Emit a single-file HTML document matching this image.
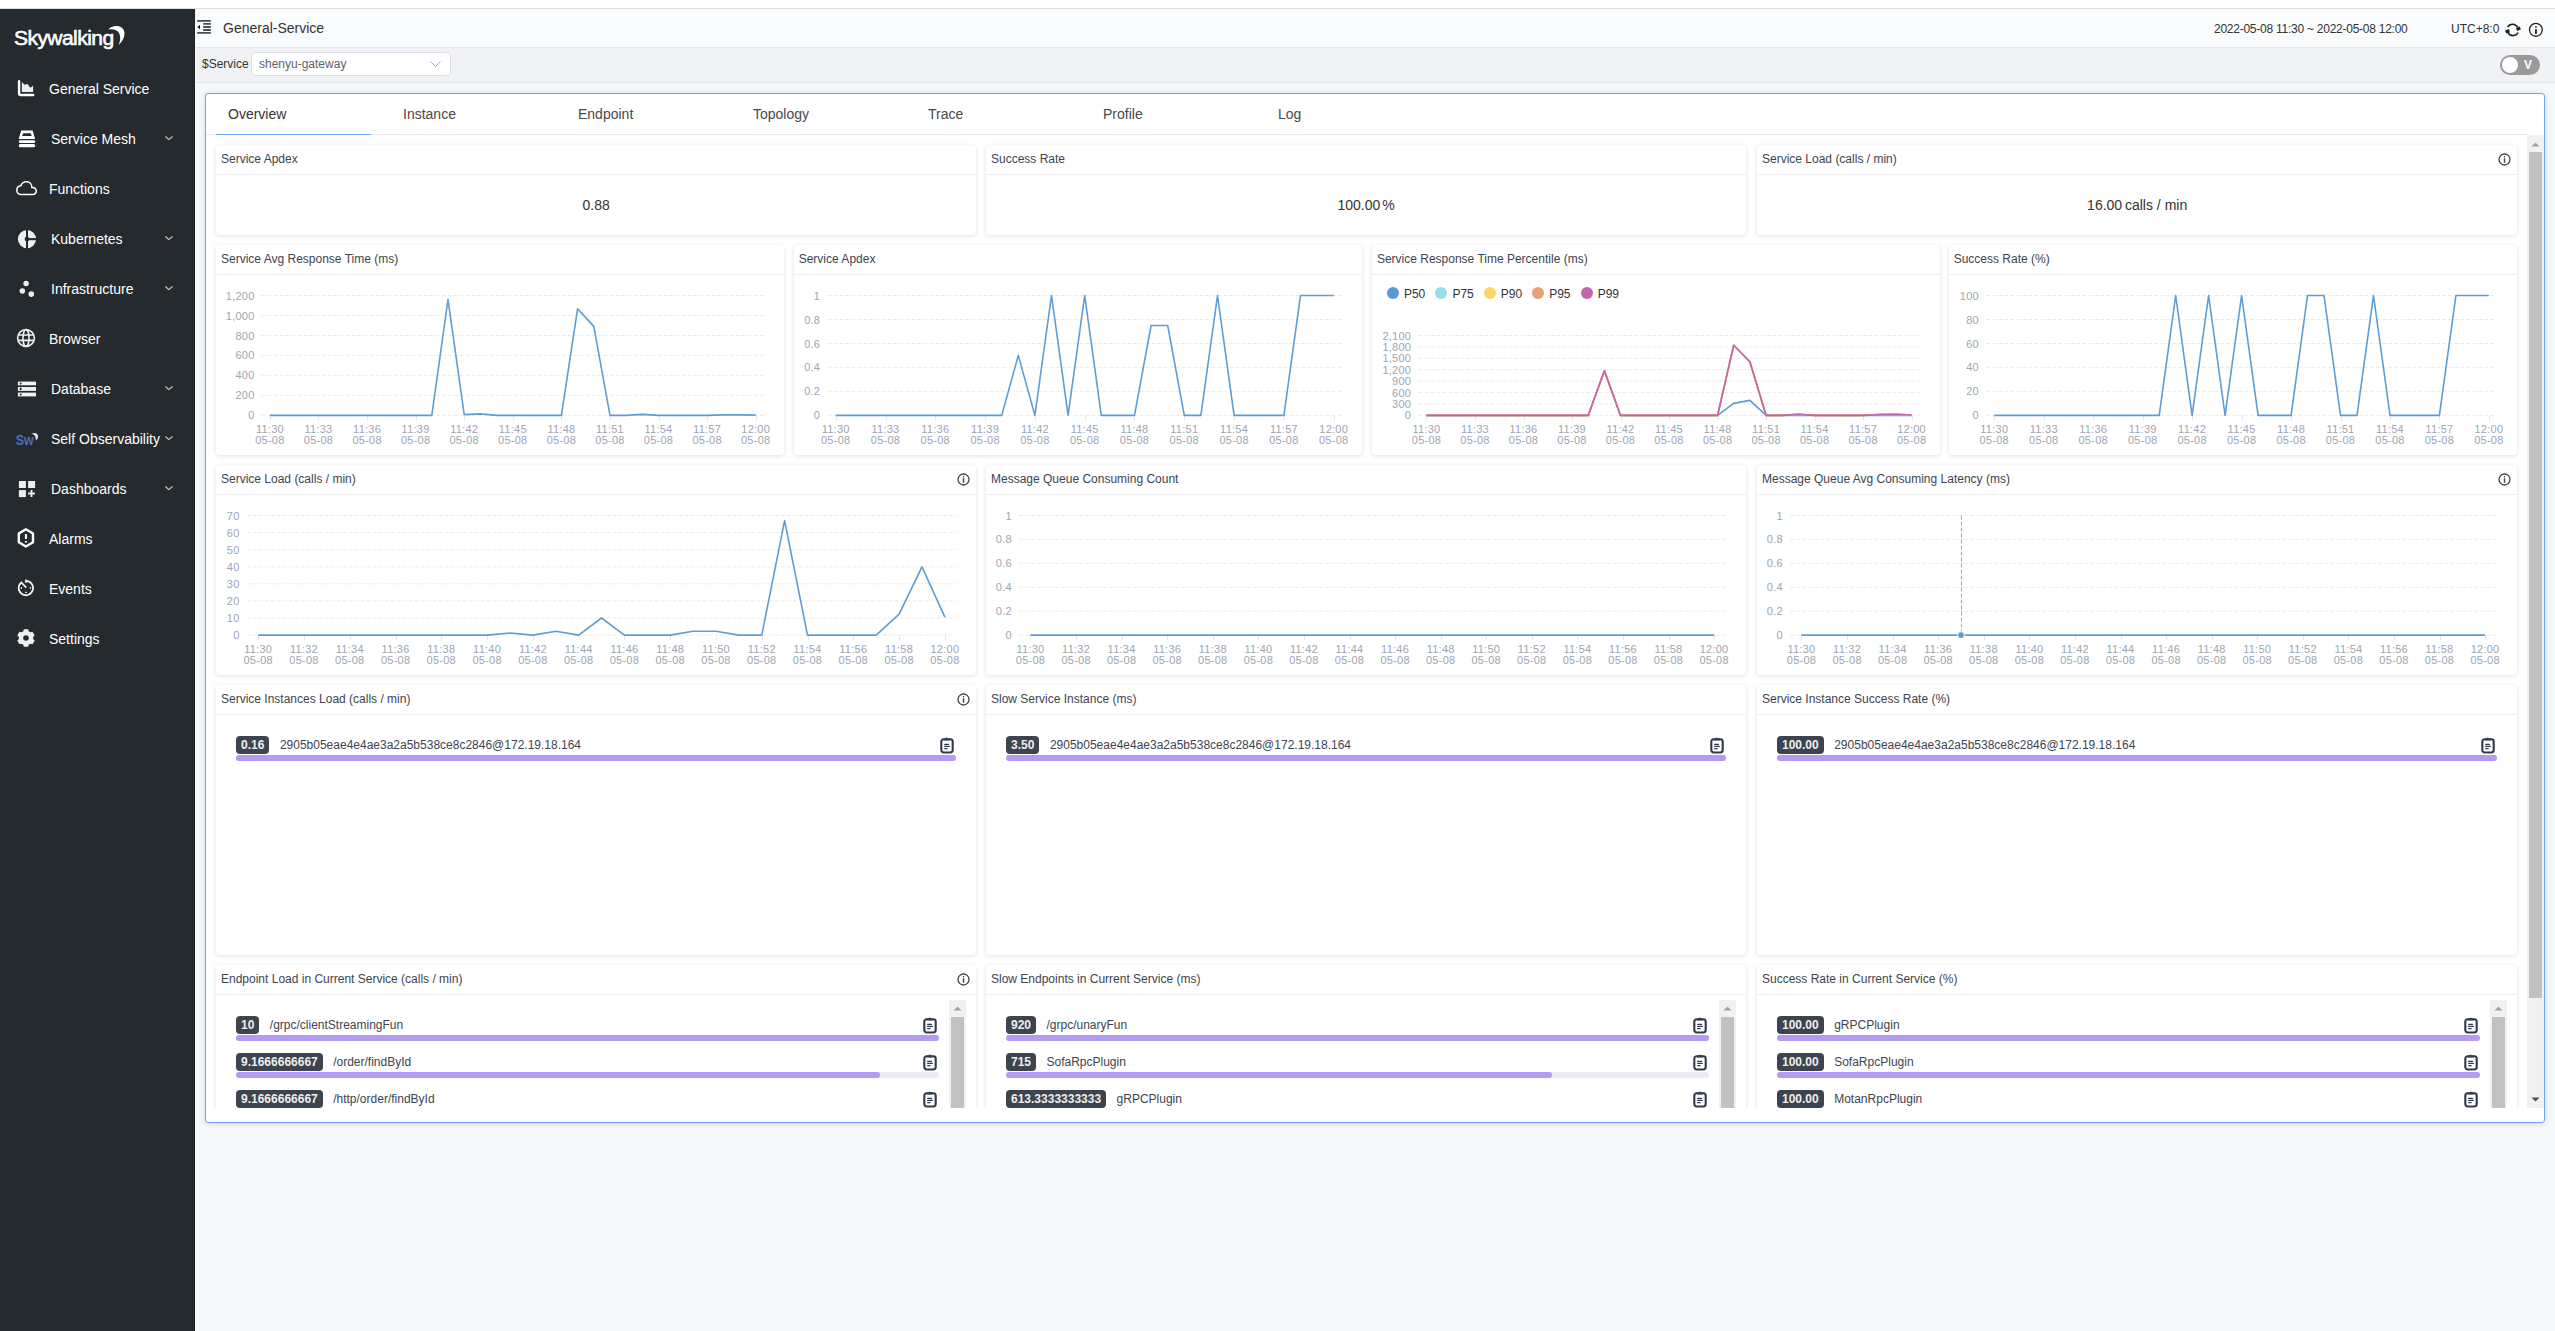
<!DOCTYPE html><html><head><meta charset="utf-8"><style>
*{box-sizing:border-box;margin:0;padding:0}
html,body{width:2555px;height:1331px;overflow:hidden;background:#f7f8fa;font-family:"Liberation Sans",sans-serif}
body{position:relative}
.a{position:absolute}
.mi{position:absolute;left:0;width:194px;height:24px;color:#fff;font-size:14px;line-height:24px;white-space:nowrap}
.mi .t{position:absolute;top:0}
.mi svg{position:absolute}
.panel{position:absolute;background:#fff;border-radius:4px;box-shadow:0 1px 4px rgba(0,0,0,.13)}
.ph{position:absolute;left:0;top:0;right:0;height:30px;border-bottom:1px solid #eee;font-size:12px;color:#3d444f;line-height:28px;padding-left:5px;white-space:nowrap}
.tab{position:absolute;top:106px;font-size:14px;color:#484848;line-height:16px;white-space:nowrap}
.badge{position:absolute;height:18px;line-height:18px;background:#3d444f;color:#eee;font-size:12px;font-weight:bold;border-radius:4px;padding:0 5px;white-space:nowrap}
.itxt{position:absolute;font-size:12px;color:#3d444f;line-height:18px;white-space:nowrap}
.bar{position:absolute;height:6px;border-radius:3px;background:#b49af2}
.track{position:absolute;height:6px;border-radius:3px;background:#e9ecf5}
svg text{font-family:"Liberation Sans",sans-serif}
</style></head><body>
<div class="a" style="left:0;top:0;width:2555px;height:9px;background:#fff;border-bottom:1px solid #dcdfe3"></div>
<div class="a" style="left:0;top:9px;width:195px;height:1322px;background:#252a2f;border-right:1px solid #1d2125"></div>
<div class="a" style="left:14px;top:26px;font-size:21px;color:#fff;letter-spacing:-.55px;line-height:24px;-webkit-text-stroke:.6px #fff;white-space:nowrap">Skywalking</div>
<svg class="a" style="left:106px;top:24px" width="22" height="24" viewBox="0 0 22 24"><path d="M2.3 5.6C5 2 11 .7 15.5 3.5C19.8 6.5 20.2 14.2 12.5 21C15.2 15.5 14.6 10.2 11.6 7.3C9.2 5.1 5.6 4.7 2.3 5.6Z" fill="#fff"/></svg>
<svg class="a" style="left:14px;top:77px" width="30" height="24" viewBox="0 0 30 24"><path d="M5.05 4.1V16.7Q5.05 17.95 6.3 17.95H19.2" stroke="#fff" stroke-width="2.4" fill="none" stroke-linecap="round"/><path d="M7.8 15V4.9l2.8 2.9 2.9-.8 2.9 3.8 2.7-2V15z" fill="#eee"/></svg>
<div class="a" style="left:49px;top:81px;color:#fff;font-size:14px;line-height:16px;white-space:nowrap">General Service</div>
<svg class="a" style="left:14px;top:127px" width="30" height="24" viewBox="0 0 30 24"><path fill-rule="evenodd" fill="#fff" d="M7.2 3.6h11.4l2.5 8.3H4.7zM9.2 6.2l-1.1 2.8h9.8l-1.3-2.8z"/><rect x="4.8" y="13.2" width="16.4" height="2.8" rx="1.4" fill="#fff"/><rect x="4.8" y="17.1" width="16.4" height="3.1" rx="1.5" fill="#fff"/></svg>
<div class="a" style="left:51px;top:131px;color:#fff;font-size:14px;line-height:16px;white-space:nowrap">Service Mesh</div>
<svg class="a" style="left:164px;top:136px" width="10" height="6" viewBox="0 0 10 6"><path d="M1.45 .5L4.8 3.6L8.5 .5" stroke="#d0d0d0" stroke-width="1.1" fill="none"/></svg>
<svg class="a" style="left:12px;top:176px" width="30" height="24" viewBox="0 0 30 24"><path d="M8.3 18.4H20.2A3.5 3.5 0 1 0 19.8 11.6A5.55 5.55 0 0 0 8.9 9.8A4.35 4.35 0 0 0 8.3 18.4Z" fill="none" stroke="#fff" stroke-width="1.5" stroke-linejoin="round"/></svg>
<div class="a" style="left:49px;top:181px;color:#fff;font-size:14px;line-height:16px;white-space:nowrap">Functions</div>
<svg class="a" style="left:14px;top:227px" width="30" height="24" viewBox="0 0 30 24"><defs><mask id="km"><rect width="24" height="24" fill="#fff"/><rect x="12" y="0" width="2" height="24" fill="#000"/><rect x="13" y="11.1" width="12" height="2.1" fill="#000"/><circle cx="13" cy="12.1" r="2.4" fill="#000"/></mask></defs><circle cx="13" cy="12.1" r="9.1" fill="#eee" mask="url(#km)"/></svg>
<div class="a" style="left:51px;top:231px;color:#fff;font-size:14px;line-height:16px;white-space:nowrap">Kubernetes</div>
<svg class="a" style="left:164px;top:236px" width="10" height="6" viewBox="0 0 10 6"><path d="M1.45 .5L4.8 3.6L8.5 .5" stroke="#d0d0d0" stroke-width="1.1" fill="none"/></svg>
<svg class="a" style="left:14px;top:277px" width="30" height="24" viewBox="0 0 30 24"><circle cx="12.1" cy="6.5" r="2.75" fill="#eee"/><circle cx="8.3" cy="13.9" r="2.75" fill="#eee"/><circle cx="17.3" cy="17.1" r="2.8" fill="#eee"/></svg>
<div class="a" style="left:51px;top:281px;color:#fff;font-size:14px;line-height:16px;white-space:nowrap">Infrastructure</div>
<svg class="a" style="left:164px;top:286px" width="10" height="6" viewBox="0 0 10 6"><path d="M1.45 .5L4.8 3.6L8.5 .5" stroke="#d0d0d0" stroke-width="1.1" fill="none"/></svg>
<svg class="a" style="left:12px;top:326px" width="30" height="24" viewBox="0 0 30 24"><g fill="none" stroke="#eee" stroke-width="1.6"><circle cx="14" cy="12" r="8.4"/><ellipse cx="14" cy="12" rx="3" ry="8.4"/><path d="M6.2 9H21.8M6.2 14.4H21.8"/></g></svg>
<div class="a" style="left:49px;top:331px;color:#fff;font-size:14px;line-height:16px;white-space:nowrap">Browser</div>
<svg class="a" style="left:14px;top:377px" width="30" height="24" viewBox="0 0 30 24"><rect x="3.9" y="4.6" width="18.1" height="3.7" fill="#f2f2f2"/><rect x="3.9" y="10" width="18.1" height="3.9" fill="#eee"/><rect x="3.9" y="15.6" width="18.1" height="3.8" fill="#f2f2f2"/><circle cx="6.6" cy="6.45" r="1" fill="#252a2f"/><ellipse cx="6.6" cy="11.95" rx="1" ry="1.4" fill="#252a2f"/><circle cx="6.6" cy="17.5" r="1" fill="#252a2f"/></svg>
<div class="a" style="left:51px;top:381px;color:#fff;font-size:14px;line-height:16px;white-space:nowrap">Database</div>
<svg class="a" style="left:164px;top:386px" width="10" height="6" viewBox="0 0 10 6"><path d="M1.45 .5L4.8 3.6L8.5 .5" stroke="#d0d0d0" stroke-width="1.1" fill="none"/></svg>
<svg class="a" style="left:12px;top:426px" width="30" height="24" viewBox="0 0 30 24"><text x="3.8" y="18.8" font-size="15" font-weight="bold" fill="#4670c0" textLength="18" lengthAdjust="spacingAndGlyphs">Sw</text><path d="M19.7 7.8C22 6.2 26.3 7 26.1 10.8C26 12.5 25 13.8 23.6 14.4C24.3 11.5 23.2 8.8 19.7 7.8Z" fill="#e6e6e6"/></svg>
<div class="a" style="left:51px;top:431px;color:#fff;font-size:14px;line-height:16px;white-space:nowrap">Self Observability</div>
<svg class="a" style="left:164px;top:436px" width="10" height="6" viewBox="0 0 10 6"><path d="M1.45 .5L4.8 3.6L8.5 .5" stroke="#d0d0d0" stroke-width="1.1" fill="none"/></svg>
<svg class="a" style="left:14px;top:476px" width="30" height="24" viewBox="0 0 30 24"><rect x="4.9" y="5" width="7" height="7" fill="#eee"/><rect x="14.1" y="5" width="7" height="7" fill="#eee"/><rect x="4.9" y="14.1" width="7" height="7" fill="#eee"/><path d="M17.5 14.1v6.8M14.1 17.5h6.8" stroke="#eee" stroke-width="1.9"/></svg>
<div class="a" style="left:51px;top:481px;color:#fff;font-size:14px;line-height:16px;white-space:nowrap">Dashboards</div>
<svg class="a" style="left:164px;top:486px" width="10" height="6" viewBox="0 0 10 6"><path d="M1.45 .5L4.8 3.6L8.5 .5" stroke="#d0d0d0" stroke-width="1.1" fill="none"/></svg>
<svg class="a" style="left:14px;top:526px" width="30" height="24" viewBox="0 0 30 24"><path d="M11.9 3.2L19 7.55V16.25L11.9 20.6L4.8 16.25V7.55Z" fill="none" stroke="#fff" stroke-width="2.4" stroke-linejoin="round"/><rect x="10.9" y="7.9" width="2.1" height="5.2" rx=".6" fill="#fff"/><rect x="10.8" y="15" width="2.3" height="1.6" rx=".6" fill="#fff"/></svg>
<div class="a" style="left:49px;top:531px;color:#fff;font-size:14px;line-height:16px;white-space:nowrap">Alarms</div>
<svg class="a" style="left:14px;top:576px" width="30" height="24" viewBox="0 0 30 24"><path d="M11.9 4.8A7.2 7.2 0 1 1 7.27 6.48L12.3 11.7" fill="none" stroke="#eee" stroke-width="1.8"/><rect x="11" y="3.6" width="2" height="3" fill="#eee"/><rect x="6.8" y="11" width="1.2" height="1.8" fill="#eee"/><rect x="15.8" y="11" width="1.2" height="1.8" fill="#eee"/><rect x="11" y="15.8" width="1.8" height="1.2" fill="#eee"/></svg>
<div class="a" style="left:49px;top:581px;color:#fff;font-size:14px;line-height:16px;white-space:nowrap">Events</div>
<svg class="a" style="left:14px;top:626px" width="30" height="24" viewBox="0 0 30 24"><path fill-rule="evenodd" fill="#eee" d="M14.62 5.18 L14.20 3.17 L9.80 3.17 L9.38 5.18 L7.41 6.33 L5.45 5.68 L3.25 9.49 L4.79 10.86 L4.79 13.14 L3.25 14.51 L5.45 18.32 L7.41 17.67 L9.38 18.82 L9.80 20.83 L14.20 20.83 L14.62 18.82 L16.59 17.67 L18.55 18.32 L20.75 14.51 L19.21 13.14 L19.21 10.86 L20.75 9.49 L18.55 5.68 L16.59 6.33Z M12 9.2A2.8 2.8 0 1 0 12 14.8A2.8 2.8 0 1 0 12 9.2Z"/></svg>
<div class="a" style="left:49px;top:631px;color:#fff;font-size:14px;line-height:16px;white-space:nowrap">Settings</div>
<div class="a" style="left:196px;top:9px;width:2359px;height:39px;background:#fafbfc;border-bottom:1px solid #dfe4e8"></div>
<svg class="a" style="left:196px;top:19px" width="16" height="16" viewBox="0 0 16 16"><g fill="#4a4d52"><rect x="1.1" y="1" width="13.8" height="1.8" rx=".6"/><rect x="7.1" y="4" width="7.8" height="1.8" rx=".6"/><rect x="7.1" y="7.1" width="7.8" height="1.8" rx=".6"/><rect x="7.1" y="10.1" width="7.8" height="1.8" rx=".6"/><rect x="1.1" y="13" width="13.8" height="1.8" rx=".6"/></g><path d="M1.3 7.9L4 5.9V10.2Z" fill="#111"/></svg>
<div class="a" style="left:223px;top:20px;font-size:14px;color:#333;line-height:16px">General-Service</div>
<div class="a" style="left:2214px;top:22px;font-size:12px;color:#333;line-height:14px;letter-spacing:-.25px;white-space:nowrap">2022-05-08 11:30 ~ 2022-05-08 12:00</div>
<div class="a" style="left:2451px;top:22px;font-size:12px;color:#333;line-height:14px;white-space:nowrap">UTC+8:0</div>
<svg class="a" style="left:2504px;top:21px" width="18" height="18" viewBox="0 0 18 18"><g fill="none" stroke="#222" stroke-width="1.6"><path d="M3.6 6.2A5.6 5.6 0 0 1 13.6 6.4"/><path d="M14.1 11.5A5.6 5.6 0 0 1 3.9 11.2"/></g><rect x="-2" y="-1.6" width="4" height="3.3" fill="#222" transform="translate(14.4 7.7) rotate(-20)"/><rect x="-2" y="-1.7" width="4" height="3.3" fill="#222" transform="translate(3.5 10.4) rotate(-20)"/></svg>
<svg class="a" style="left:2527px;top:21px" width="18" height="18" viewBox="0 0 18 18"><circle cx="8.9" cy="8.8" r="6.45" fill="none" stroke="#222" stroke-width="1.3"/><rect x="8.05" y="5.2" width="1.8" height="1.6" rx=".4" fill="#222"/><rect x="8.05" y="8.2" width="1.8" height="4.7" rx=".3" fill="#222"/></svg>
<div class="a" style="left:196px;top:48px;width:2359px;height:35px;background:#f0f2f5;border-bottom:1px solid #dfe4e8"></div>
<div class="a" style="left:202px;top:57px;font-size:12px;color:#333;line-height:14px">$Service</div>
<div class="a" style="left:251px;top:52px;width:200px;height:24px;background:#fff;border:1px solid #dcdfe6;border-radius:4px"></div>
<div class="a" style="left:259px;top:57px;font-size:12px;color:#606266;line-height:14px">shenyu-gateway</div>
<svg class="a" style="left:430px;top:61px" width="11" height="7" viewBox="0 0 11 7"><path d="M0.5 0.5l5 5 5-5" stroke="#a8abb2" stroke-width="1" fill="none"/></svg>
<div class="a" style="left:2500px;top:55px;width:40px;height:20px;border-radius:10px;background:#9a9a9a"></div>
<div class="a" style="left:2502px;top:57px;width:16px;height:16px;border-radius:50%;background:#fff"></div>
<div class="a" style="left:2524px;top:58px;font-size:12px;font-weight:bold;color:#fff;line-height:14px">V</div>
<div class="a" style="left:205px;top:93px;width:2340px;height:1030px;background:#fff;border:1px solid #6ea0ff;border-radius:3px;box-shadow:0 1px 6px rgba(0,0,0,.12)"></div>
<div class="a" style="left:206px;top:134px;width:2321px;height:1px;background:#e8e8e8"></div>
<div class="a" style="left:216px;top:134px;width:155px;height:1px;background:#6ea2ff"></div>
<div class="tab" style="left:228px;color:#333">Overview</div>
<div class="tab" style="left:403px;">Instance</div>
<div class="tab" style="left:578px;">Endpoint</div>
<div class="tab" style="left:753px;">Topology</div>
<div class="tab" style="left:928px;">Trace</div>
<div class="tab" style="left:1103px;">Profile</div>
<div class="tab" style="left:1278px;">Log</div>
<div class="a" style="left:206px;top:135px;width:2321px;height:973px;overflow:hidden">
<div class="panel" style="left:10.0px;top:10.0px;width:760.3px;height:90px"><div class="ph">Service Apdex</div><div class="a" style="left:0;right:0;top:51px;text-align:center;font-size:14px;color:#333;line-height:18px">0.88</div></div>
<div class="panel" style="left:780.0px;top:10.0px;width:760.3px;height:90px"><div class="ph">Success Rate</div><div class="a" style="left:0;right:0;top:51px;text-align:center;font-size:14px;color:#333;line-height:18px">100.00<span style="margin-left:2px">%</span></div></div>
<div class="panel" style="left:1551.0px;top:10.0px;width:760.3px;height:90px"><div class="ph">Service Load (calls / min)</div><svg class="a" style="right:6px;top:8px" width="13" height="13" viewBox="0 0 13 13"><circle cx="6.5" cy="6.5" r="5.5" fill="none" stroke="#3d444f" stroke-width="1.3"/><rect x="5.8" y="3.1" width="1.4" height="1.3" rx=".3" fill="#3d444f"/><rect x="5.8" y="5.2" width="1.4" height="4.6" rx=".3" fill="#3d444f"/></svg><div class="a" style="left:0;right:0;top:51px;text-align:center;font-size:14px;color:#333;line-height:18px">16.00<span style="margin-left:2.8px">calls / min</span></div></div>
<div class="panel" style="left:10.0px;top:110.0px;width:568.2px;height:210px"><div class="ph">Service Avg Response Time (ms)</div><svg class="a" style="left:0;top:0" width="568.2" height="210"><line x1="45.8" y1="50.5" x2="547.8" y2="50.5" stroke="#ebebeb" stroke-width="1" stroke-dasharray="4 2"/><text x="38.6" y="54.5" font-size="11" letter-spacing=".25" fill="#9da5b2" text-anchor="end">1,200</text><line x1="45.8" y1="70.5" x2="547.8" y2="70.5" stroke="#ebebeb" stroke-width="1" stroke-dasharray="4 2"/><text x="38.6" y="74.5" font-size="11" letter-spacing=".25" fill="#9da5b2" text-anchor="end">1,000</text><line x1="45.8" y1="90.5" x2="547.8" y2="90.5" stroke="#ebebeb" stroke-width="1" stroke-dasharray="4 2"/><text x="38.6" y="94.5" font-size="11" letter-spacing=".25" fill="#9da5b2" text-anchor="end">800</text><line x1="45.8" y1="110.4" x2="547.8" y2="110.4" stroke="#ebebeb" stroke-width="1" stroke-dasharray="4 2"/><text x="38.6" y="114.4" font-size="11" letter-spacing=".25" fill="#9da5b2" text-anchor="end">600</text><line x1="45.8" y1="130.4" x2="547.8" y2="130.4" stroke="#ebebeb" stroke-width="1" stroke-dasharray="4 2"/><text x="38.6" y="134.4" font-size="11" letter-spacing=".25" fill="#9da5b2" text-anchor="end">400</text><line x1="45.8" y1="150.4" x2="547.8" y2="150.4" stroke="#ebebeb" stroke-width="1" stroke-dasharray="4 2"/><text x="38.6" y="154.4" font-size="11" letter-spacing=".25" fill="#9da5b2" text-anchor="end">200</text><line x1="45.8" y1="170.4" x2="547.8" y2="170.4" stroke="#ebebeb" stroke-width="1" stroke-dasharray="4 2"/><text x="38.6" y="174.4" font-size="11" letter-spacing=".25" fill="#9da5b2" text-anchor="end">0</text><line x1="54.5" y1="170.4" x2="54.5" y2="175.4" stroke="#e3e5ea" stroke-width="1"/><text x="53.9" y="188.4" font-size="11" letter-spacing=".25" fill="#9da5b2" text-anchor="middle">11:30</text><text x="53.9" y="199.4" font-size="11" letter-spacing=".25" fill="#9da5b2" text-anchor="middle">05-08</text><line x1="102.5" y1="170.4" x2="102.5" y2="175.4" stroke="#e3e5ea" stroke-width="1"/><text x="102.5" y="188.4" font-size="11" letter-spacing=".25" fill="#9da5b2" text-anchor="middle">11:33</text><text x="102.5" y="199.4" font-size="11" letter-spacing=".25" fill="#9da5b2" text-anchor="middle">05-08</text><line x1="151.5" y1="170.4" x2="151.5" y2="175.4" stroke="#e3e5ea" stroke-width="1"/><text x="151.1" y="188.4" font-size="11" letter-spacing=".25" fill="#9da5b2" text-anchor="middle">11:36</text><text x="151.1" y="199.4" font-size="11" letter-spacing=".25" fill="#9da5b2" text-anchor="middle">05-08</text><line x1="200.5" y1="170.4" x2="200.5" y2="175.4" stroke="#e3e5ea" stroke-width="1"/><text x="199.6" y="188.4" font-size="11" letter-spacing=".25" fill="#9da5b2" text-anchor="middle">11:39</text><text x="199.6" y="199.4" font-size="11" letter-spacing=".25" fill="#9da5b2" text-anchor="middle">05-08</text><line x1="248.5" y1="170.4" x2="248.5" y2="175.4" stroke="#e3e5ea" stroke-width="1"/><text x="248.2" y="188.4" font-size="11" letter-spacing=".25" fill="#9da5b2" text-anchor="middle">11:42</text><text x="248.2" y="199.4" font-size="11" letter-spacing=".25" fill="#9da5b2" text-anchor="middle">05-08</text><line x1="297.5" y1="170.4" x2="297.5" y2="175.4" stroke="#e3e5ea" stroke-width="1"/><text x="296.8" y="188.4" font-size="11" letter-spacing=".25" fill="#9da5b2" text-anchor="middle">11:45</text><text x="296.8" y="199.4" font-size="11" letter-spacing=".25" fill="#9da5b2" text-anchor="middle">05-08</text><line x1="345.5" y1="170.4" x2="345.5" y2="175.4" stroke="#e3e5ea" stroke-width="1"/><text x="345.4" y="188.4" font-size="11" letter-spacing=".25" fill="#9da5b2" text-anchor="middle">11:48</text><text x="345.4" y="199.4" font-size="11" letter-spacing=".25" fill="#9da5b2" text-anchor="middle">05-08</text><line x1="394.5" y1="170.4" x2="394.5" y2="175.4" stroke="#e3e5ea" stroke-width="1"/><text x="394.0" y="188.4" font-size="11" letter-spacing=".25" fill="#9da5b2" text-anchor="middle">11:51</text><text x="394.0" y="199.4" font-size="11" letter-spacing=".25" fill="#9da5b2" text-anchor="middle">05-08</text><line x1="443.5" y1="170.4" x2="443.5" y2="175.4" stroke="#e3e5ea" stroke-width="1"/><text x="442.5" y="188.4" font-size="11" letter-spacing=".25" fill="#9da5b2" text-anchor="middle">11:54</text><text x="442.5" y="199.4" font-size="11" letter-spacing=".25" fill="#9da5b2" text-anchor="middle">05-08</text><line x1="491.5" y1="170.4" x2="491.5" y2="175.4" stroke="#e3e5ea" stroke-width="1"/><text x="491.1" y="188.4" font-size="11" letter-spacing=".25" fill="#9da5b2" text-anchor="middle">11:57</text><text x="491.1" y="199.4" font-size="11" letter-spacing=".25" fill="#9da5b2" text-anchor="middle">05-08</text><line x1="540.5" y1="170.4" x2="540.5" y2="175.4" stroke="#e3e5ea" stroke-width="1"/><text x="539.7" y="188.4" font-size="11" letter-spacing=".25" fill="#9da5b2" text-anchor="middle">12:00</text><text x="539.7" y="199.4" font-size="11" letter-spacing=".25" fill="#9da5b2" text-anchor="middle">05-08</text><polyline points="53.9,170.4 70.1,170.4 86.3,170.4 102.5,170.4 118.7,170.4 134.9,170.4 151.1,170.4 167.3,170.4 183.4,170.4 199.6,170.4 215.8,170.4 232.0,54.5 248.2,169.6 264.4,168.9 280.6,170.4 296.8,170.4 313.0,170.4 329.2,170.4 345.4,170.4 361.6,63.7 377.8,81.4 394.0,170.4 410.2,170.4 426.3,169.4 442.5,170.4 458.7,170.4 474.9,170.4 491.1,170.4 507.3,169.9 523.5,169.9 539.7,170.1" fill="none" stroke="#5d9dd6" stroke-width="1.6" stroke-linejoin="round"/></svg></div>
<div class="panel" style="left:587.7px;top:110.0px;width:568.4px;height:210px"><div class="ph">Service Apdex</div><svg class="a" style="left:0;top:0" width="568.4" height="210"><line x1="33.4" y1="50.5" x2="548.0" y2="50.5" stroke="#ebebeb" stroke-width="1" stroke-dasharray="4 2"/><text x="26.2" y="54.5" font-size="11" letter-spacing=".25" fill="#9da5b2" text-anchor="end">1</text><line x1="33.4" y1="74.5" x2="548.0" y2="74.5" stroke="#ebebeb" stroke-width="1" stroke-dasharray="4 2"/><text x="26.2" y="78.5" font-size="11" letter-spacing=".25" fill="#9da5b2" text-anchor="end">0.8</text><line x1="33.4" y1="98.5" x2="548.0" y2="98.5" stroke="#ebebeb" stroke-width="1" stroke-dasharray="4 2"/><text x="26.2" y="102.5" font-size="11" letter-spacing=".25" fill="#9da5b2" text-anchor="end">0.6</text><line x1="33.4" y1="122.4" x2="548.0" y2="122.4" stroke="#ebebeb" stroke-width="1" stroke-dasharray="4 2"/><text x="26.2" y="126.4" font-size="11" letter-spacing=".25" fill="#9da5b2" text-anchor="end">0.4</text><line x1="33.4" y1="146.4" x2="548.0" y2="146.4" stroke="#ebebeb" stroke-width="1" stroke-dasharray="4 2"/><text x="26.2" y="150.4" font-size="11" letter-spacing=".25" fill="#9da5b2" text-anchor="end">0.2</text><line x1="33.4" y1="170.4" x2="548.0" y2="170.4" stroke="#ebebeb" stroke-width="1" stroke-dasharray="4 2"/><text x="26.2" y="174.4" font-size="11" letter-spacing=".25" fill="#9da5b2" text-anchor="end">0</text><line x1="42.5" y1="170.4" x2="42.5" y2="175.4" stroke="#e3e5ea" stroke-width="1"/><text x="41.7" y="188.4" font-size="11" letter-spacing=".25" fill="#9da5b2" text-anchor="middle">11:30</text><text x="41.7" y="199.4" font-size="11" letter-spacing=".25" fill="#9da5b2" text-anchor="middle">05-08</text><line x1="92.5" y1="170.4" x2="92.5" y2="175.4" stroke="#e3e5ea" stroke-width="1"/><text x="91.5" y="188.4" font-size="11" letter-spacing=".25" fill="#9da5b2" text-anchor="middle">11:33</text><text x="91.5" y="199.4" font-size="11" letter-spacing=".25" fill="#9da5b2" text-anchor="middle">05-08</text><line x1="141.5" y1="170.4" x2="141.5" y2="175.4" stroke="#e3e5ea" stroke-width="1"/><text x="141.3" y="188.4" font-size="11" letter-spacing=".25" fill="#9da5b2" text-anchor="middle">11:36</text><text x="141.3" y="199.4" font-size="11" letter-spacing=".25" fill="#9da5b2" text-anchor="middle">05-08</text><line x1="191.5" y1="170.4" x2="191.5" y2="175.4" stroke="#e3e5ea" stroke-width="1"/><text x="191.1" y="188.4" font-size="11" letter-spacing=".25" fill="#9da5b2" text-anchor="middle">11:39</text><text x="191.1" y="199.4" font-size="11" letter-spacing=".25" fill="#9da5b2" text-anchor="middle">05-08</text><line x1="241.5" y1="170.4" x2="241.5" y2="175.4" stroke="#e3e5ea" stroke-width="1"/><text x="240.9" y="188.4" font-size="11" letter-spacing=".25" fill="#9da5b2" text-anchor="middle">11:42</text><text x="240.9" y="199.4" font-size="11" letter-spacing=".25" fill="#9da5b2" text-anchor="middle">05-08</text><line x1="291.5" y1="170.4" x2="291.5" y2="175.4" stroke="#e3e5ea" stroke-width="1"/><text x="290.7" y="188.4" font-size="11" letter-spacing=".25" fill="#9da5b2" text-anchor="middle">11:45</text><text x="290.7" y="199.4" font-size="11" letter-spacing=".25" fill="#9da5b2" text-anchor="middle">05-08</text><line x1="340.5" y1="170.4" x2="340.5" y2="175.4" stroke="#e3e5ea" stroke-width="1"/><text x="340.5" y="188.4" font-size="11" letter-spacing=".25" fill="#9da5b2" text-anchor="middle">11:48</text><text x="340.5" y="199.4" font-size="11" letter-spacing=".25" fill="#9da5b2" text-anchor="middle">05-08</text><line x1="390.5" y1="170.4" x2="390.5" y2="175.4" stroke="#e3e5ea" stroke-width="1"/><text x="390.3" y="188.4" font-size="11" letter-spacing=".25" fill="#9da5b2" text-anchor="middle">11:51</text><text x="390.3" y="199.4" font-size="11" letter-spacing=".25" fill="#9da5b2" text-anchor="middle">05-08</text><line x1="440.5" y1="170.4" x2="440.5" y2="175.4" stroke="#e3e5ea" stroke-width="1"/><text x="440.1" y="188.4" font-size="11" letter-spacing=".25" fill="#9da5b2" text-anchor="middle">11:54</text><text x="440.1" y="199.4" font-size="11" letter-spacing=".25" fill="#9da5b2" text-anchor="middle">05-08</text><line x1="490.5" y1="170.4" x2="490.5" y2="175.4" stroke="#e3e5ea" stroke-width="1"/><text x="489.9" y="188.4" font-size="11" letter-spacing=".25" fill="#9da5b2" text-anchor="middle">11:57</text><text x="489.9" y="199.4" font-size="11" letter-spacing=".25" fill="#9da5b2" text-anchor="middle">05-08</text><line x1="540.5" y1="170.4" x2="540.5" y2="175.4" stroke="#e3e5ea" stroke-width="1"/><text x="539.7" y="188.4" font-size="11" letter-spacing=".25" fill="#9da5b2" text-anchor="middle">12:00</text><text x="539.7" y="199.4" font-size="11" letter-spacing=".25" fill="#9da5b2" text-anchor="middle">05-08</text><polyline points="41.7,170.4 58.3,170.4 74.9,170.4 91.5,170.4 108.1,170.4 124.7,170.4 141.3,170.4 157.9,170.4 174.5,170.4 191.1,170.4 207.7,170.4 224.3,110.4 240.9,170.4 257.5,50.5 274.1,170.4 290.7,50.5 307.3,170.4 323.9,170.4 340.5,170.4 357.1,80.5 373.7,80.5 390.3,170.4 406.9,170.4 423.5,50.5 440.1,170.4 456.7,170.4 473.3,170.4 489.9,170.4 506.5,50.5 523.1,50.5 539.7,50.5" fill="none" stroke="#5d9dd6" stroke-width="1.6" stroke-linejoin="round"/></svg></div>
<div class="panel" style="left:1165.9px;top:110.0px;width:568.2px;height:210px"><div class="ph">Service Response Time Percentile (ms)</div><div class="a" style="left:15.0px;top:41.6px;width:12px;height:12px;border-radius:50%;background:#5b9bd5"></div><div class="a" style="left:32.0px;top:42px;font-size:12px;color:#333;line-height:15px">P50</div><div class="a" style="left:63.5px;top:41.6px;width:12px;height:12px;border-radius:50%;background:#96dee8"></div><div class="a" style="left:80.5px;top:42px;font-size:12px;color:#333;line-height:15px">P75</div><div class="a" style="left:111.9px;top:41.6px;width:12px;height:12px;border-radius:50%;background:#f6d864"></div><div class="a" style="left:128.9px;top:42px;font-size:12px;color:#333;line-height:15px">P90</div><div class="a" style="left:160.3px;top:41.6px;width:12px;height:12px;border-radius:50%;background:#ea9f7b"></div><div class="a" style="left:177.3px;top:42px;font-size:12px;color:#333;line-height:15px">P95</div><div class="a" style="left:208.8px;top:41.6px;width:12px;height:12px;border-radius:50%;background:#c464ad"></div><div class="a" style="left:225.8px;top:42px;font-size:12px;color:#333;line-height:15px">P99</div><svg class="a" style="left:0;top:0" width="568.2" height="210"><line x1="46.4" y1="90.5" x2="547.7" y2="90.5" stroke="#ebebeb" stroke-width="1" stroke-dasharray="4 2"/><text x="39.2" y="94.5" font-size="11" letter-spacing=".25" fill="#9da5b2" text-anchor="end">2,100</text><line x1="46.4" y1="101.9" x2="547.7" y2="101.9" stroke="#ebebeb" stroke-width="1" stroke-dasharray="4 2"/><text x="39.2" y="105.9" font-size="11" letter-spacing=".25" fill="#9da5b2" text-anchor="end">1,800</text><line x1="46.4" y1="113.3" x2="547.7" y2="113.3" stroke="#ebebeb" stroke-width="1" stroke-dasharray="4 2"/><text x="39.2" y="117.3" font-size="11" letter-spacing=".25" fill="#9da5b2" text-anchor="end">1,500</text><line x1="46.4" y1="124.7" x2="547.7" y2="124.7" stroke="#ebebeb" stroke-width="1" stroke-dasharray="4 2"/><text x="39.2" y="128.7" font-size="11" letter-spacing=".25" fill="#9da5b2" text-anchor="end">1,200</text><line x1="46.4" y1="136.2" x2="547.7" y2="136.2" stroke="#ebebeb" stroke-width="1" stroke-dasharray="4 2"/><text x="39.2" y="140.2" font-size="11" letter-spacing=".25" fill="#9da5b2" text-anchor="end">900</text><line x1="46.4" y1="147.6" x2="547.7" y2="147.6" stroke="#ebebeb" stroke-width="1" stroke-dasharray="4 2"/><text x="39.2" y="151.6" font-size="11" letter-spacing=".25" fill="#9da5b2" text-anchor="end">600</text><line x1="46.4" y1="159.0" x2="547.7" y2="159.0" stroke="#ebebeb" stroke-width="1" stroke-dasharray="4 2"/><text x="39.2" y="163.0" font-size="11" letter-spacing=".25" fill="#9da5b2" text-anchor="end">300</text><line x1="46.4" y1="170.4" x2="547.7" y2="170.4" stroke="#ebebeb" stroke-width="1" stroke-dasharray="4 2"/><text x="39.2" y="174.4" font-size="11" letter-spacing=".25" fill="#9da5b2" text-anchor="end">0</text><line x1="54.5" y1="170.4" x2="54.5" y2="175.4" stroke="#e3e5ea" stroke-width="1"/><text x="54.5" y="188.4" font-size="11" letter-spacing=".25" fill="#9da5b2" text-anchor="middle">11:30</text><text x="54.5" y="199.4" font-size="11" letter-spacing=".25" fill="#9da5b2" text-anchor="middle">05-08</text><line x1="103.5" y1="170.4" x2="103.5" y2="175.4" stroke="#e3e5ea" stroke-width="1"/><text x="103.0" y="188.4" font-size="11" letter-spacing=".25" fill="#9da5b2" text-anchor="middle">11:33</text><text x="103.0" y="199.4" font-size="11" letter-spacing=".25" fill="#9da5b2" text-anchor="middle">05-08</text><line x1="152.5" y1="170.4" x2="152.5" y2="175.4" stroke="#e3e5ea" stroke-width="1"/><text x="151.5" y="188.4" font-size="11" letter-spacing=".25" fill="#9da5b2" text-anchor="middle">11:36</text><text x="151.5" y="199.4" font-size="11" letter-spacing=".25" fill="#9da5b2" text-anchor="middle">05-08</text><line x1="200.5" y1="170.4" x2="200.5" y2="175.4" stroke="#e3e5ea" stroke-width="1"/><text x="200.0" y="188.4" font-size="11" letter-spacing=".25" fill="#9da5b2" text-anchor="middle">11:39</text><text x="200.0" y="199.4" font-size="11" letter-spacing=".25" fill="#9da5b2" text-anchor="middle">05-08</text><line x1="249.5" y1="170.4" x2="249.5" y2="175.4" stroke="#e3e5ea" stroke-width="1"/><text x="248.5" y="188.4" font-size="11" letter-spacing=".25" fill="#9da5b2" text-anchor="middle">11:42</text><text x="248.5" y="199.4" font-size="11" letter-spacing=".25" fill="#9da5b2" text-anchor="middle">05-08</text><line x1="297.5" y1="170.4" x2="297.5" y2="175.4" stroke="#e3e5ea" stroke-width="1"/><text x="297.0" y="188.4" font-size="11" letter-spacing=".25" fill="#9da5b2" text-anchor="middle">11:45</text><text x="297.0" y="199.4" font-size="11" letter-spacing=".25" fill="#9da5b2" text-anchor="middle">05-08</text><line x1="346.5" y1="170.4" x2="346.5" y2="175.4" stroke="#e3e5ea" stroke-width="1"/><text x="345.6" y="188.4" font-size="11" letter-spacing=".25" fill="#9da5b2" text-anchor="middle">11:48</text><text x="345.6" y="199.4" font-size="11" letter-spacing=".25" fill="#9da5b2" text-anchor="middle">05-08</text><line x1="394.5" y1="170.4" x2="394.5" y2="175.4" stroke="#e3e5ea" stroke-width="1"/><text x="394.1" y="188.4" font-size="11" letter-spacing=".25" fill="#9da5b2" text-anchor="middle">11:51</text><text x="394.1" y="199.4" font-size="11" letter-spacing=".25" fill="#9da5b2" text-anchor="middle">05-08</text><line x1="443.5" y1="170.4" x2="443.5" y2="175.4" stroke="#e3e5ea" stroke-width="1"/><text x="442.6" y="188.4" font-size="11" letter-spacing=".25" fill="#9da5b2" text-anchor="middle">11:54</text><text x="442.6" y="199.4" font-size="11" letter-spacing=".25" fill="#9da5b2" text-anchor="middle">05-08</text><line x1="491.5" y1="170.4" x2="491.5" y2="175.4" stroke="#e3e5ea" stroke-width="1"/><text x="491.1" y="188.4" font-size="11" letter-spacing=".25" fill="#9da5b2" text-anchor="middle">11:57</text><text x="491.1" y="199.4" font-size="11" letter-spacing=".25" fill="#9da5b2" text-anchor="middle">05-08</text><line x1="540.5" y1="170.4" x2="540.5" y2="175.4" stroke="#e3e5ea" stroke-width="1"/><text x="539.6" y="188.4" font-size="11" letter-spacing=".25" fill="#9da5b2" text-anchor="middle">12:00</text><text x="539.6" y="199.4" font-size="11" letter-spacing=".25" fill="#9da5b2" text-anchor="middle">05-08</text><polyline points="54.5,170.4 70.7,170.4 86.8,170.4 103.0,170.4 119.2,170.4 135.3,170.4 151.5,170.4 167.7,170.4 183.9,170.4 200.0,170.4 216.2,170.4 232.4,125.8 248.5,170.4 264.7,170.4 280.9,170.4 297.0,170.4 313.2,170.4 329.4,170.4 345.6,170.4 361.7,158.4 377.9,155.4 394.1,170.4 410.2,170.4 426.4,170.4 442.6,170.4 458.8,170.4 474.9,170.4 491.1,170.4 507.3,170.4 523.4,170.4 539.6,170.4" fill="none" stroke="#5d9dd6" stroke-width="1.6" stroke-linejoin="round"/><polyline points="54.5,170.4 70.7,170.4 86.8,170.4 103.0,170.4 119.2,170.4 135.3,170.4 151.5,170.4 167.7,170.4 183.9,170.4 200.0,170.4 216.2,170.4 232.4,125.8 248.5,170.4 264.7,170.2 280.9,170.4 297.0,170.2 313.2,170.4 329.4,170.4 345.6,170.4 361.7,100.3 377.9,116.8 394.1,170.4 410.2,170.4 426.4,169.4 442.6,170.4 458.8,170.4 474.9,170.4 491.1,170.4 507.3,169.6 523.4,169.3 539.6,170.0" fill="none" stroke="#96dee8" stroke-width="1.6" stroke-linejoin="round"/><polyline points="54.5,170.4 70.7,170.4 86.8,170.4 103.0,170.4 119.2,170.4 135.3,170.4 151.5,170.4 167.7,170.4 183.9,170.4 200.0,170.4 216.2,170.4 232.4,125.8 248.5,170.4 264.7,170.2 280.9,170.4 297.0,170.2 313.2,170.4 329.4,170.4 345.6,170.4 361.7,100.3 377.9,116.8 394.1,170.4 410.2,170.4 426.4,169.4 442.6,170.4 458.8,170.4 474.9,170.4 491.1,170.4 507.3,169.6 523.4,169.3 539.6,170.0" fill="none" stroke="#f6d864" stroke-width="1.6" stroke-linejoin="round"/><polyline points="54.5,170.4 70.7,170.4 86.8,170.4 103.0,170.4 119.2,170.4 135.3,170.4 151.5,170.4 167.7,170.4 183.9,170.4 200.0,170.4 216.2,170.4 232.4,125.8 248.5,170.4 264.7,170.2 280.9,170.4 297.0,170.2 313.2,170.4 329.4,170.4 345.6,170.4 361.7,100.3 377.9,116.8 394.1,170.4 410.2,170.4 426.4,169.4 442.6,170.4 458.8,170.4 474.9,170.4 491.1,170.4 507.3,169.6 523.4,169.3 539.6,170.0" fill="none" stroke="#ea9f7b" stroke-width="1.6" stroke-linejoin="round"/><polyline points="54.5,170.4 70.7,170.4 86.8,170.4 103.0,170.4 119.2,170.4 135.3,170.4 151.5,170.4 167.7,170.4 183.9,170.4 200.0,170.4 216.2,170.4 232.4,125.8 248.5,170.4 264.7,170.2 280.9,170.4 297.0,170.2 313.2,170.4 329.4,170.4 345.6,170.4 361.7,100.3 377.9,116.8 394.1,170.4 410.2,170.4 426.4,169.4 442.6,170.4 458.8,170.4 474.9,170.4 491.1,170.4 507.3,169.6 523.4,169.3 539.6,170.0" fill="none" stroke="#c464ad" stroke-width="1.6" stroke-linejoin="round"/></svg></div>
<div class="panel" style="left:1742.7px;top:110.0px;width:568.5px;height:210px"><div class="ph">Success Rate (%)</div><svg class="a" style="left:0;top:0" width="568.5" height="210"><line x1="37.1" y1="50.5" x2="548.1" y2="50.5" stroke="#ebebeb" stroke-width="1" stroke-dasharray="4 2"/><text x="29.9" y="54.5" font-size="11" letter-spacing=".25" fill="#9da5b2" text-anchor="end">100</text><line x1="37.1" y1="74.5" x2="548.1" y2="74.5" stroke="#ebebeb" stroke-width="1" stroke-dasharray="4 2"/><text x="29.9" y="78.5" font-size="11" letter-spacing=".25" fill="#9da5b2" text-anchor="end">80</text><line x1="37.1" y1="98.5" x2="548.1" y2="98.5" stroke="#ebebeb" stroke-width="1" stroke-dasharray="4 2"/><text x="29.9" y="102.5" font-size="11" letter-spacing=".25" fill="#9da5b2" text-anchor="end">60</text><line x1="37.1" y1="122.4" x2="548.1" y2="122.4" stroke="#ebebeb" stroke-width="1" stroke-dasharray="4 2"/><text x="29.9" y="126.4" font-size="11" letter-spacing=".25" fill="#9da5b2" text-anchor="end">40</text><line x1="37.1" y1="146.4" x2="548.1" y2="146.4" stroke="#ebebeb" stroke-width="1" stroke-dasharray="4 2"/><text x="29.9" y="150.4" font-size="11" letter-spacing=".25" fill="#9da5b2" text-anchor="end">20</text><line x1="37.1" y1="170.4" x2="548.1" y2="170.4" stroke="#ebebeb" stroke-width="1" stroke-dasharray="4 2"/><text x="29.9" y="174.4" font-size="11" letter-spacing=".25" fill="#9da5b2" text-anchor="end">0</text><line x1="45.5" y1="170.4" x2="45.5" y2="175.4" stroke="#e3e5ea" stroke-width="1"/><text x="45.3" y="188.4" font-size="11" letter-spacing=".25" fill="#9da5b2" text-anchor="middle">11:30</text><text x="45.3" y="199.4" font-size="11" letter-spacing=".25" fill="#9da5b2" text-anchor="middle">05-08</text><line x1="95.5" y1="170.4" x2="95.5" y2="175.4" stroke="#e3e5ea" stroke-width="1"/><text x="94.8" y="188.4" font-size="11" letter-spacing=".25" fill="#9da5b2" text-anchor="middle">11:33</text><text x="94.8" y="199.4" font-size="11" letter-spacing=".25" fill="#9da5b2" text-anchor="middle">05-08</text><line x1="144.5" y1="170.4" x2="144.5" y2="175.4" stroke="#e3e5ea" stroke-width="1"/><text x="144.2" y="188.4" font-size="11" letter-spacing=".25" fill="#9da5b2" text-anchor="middle">11:36</text><text x="144.2" y="199.4" font-size="11" letter-spacing=".25" fill="#9da5b2" text-anchor="middle">05-08</text><line x1="194.5" y1="170.4" x2="194.5" y2="175.4" stroke="#e3e5ea" stroke-width="1"/><text x="193.7" y="188.4" font-size="11" letter-spacing=".25" fill="#9da5b2" text-anchor="middle">11:39</text><text x="193.7" y="199.4" font-size="11" letter-spacing=".25" fill="#9da5b2" text-anchor="middle">05-08</text><line x1="243.5" y1="170.4" x2="243.5" y2="175.4" stroke="#e3e5ea" stroke-width="1"/><text x="243.1" y="188.4" font-size="11" letter-spacing=".25" fill="#9da5b2" text-anchor="middle">11:42</text><text x="243.1" y="199.4" font-size="11" letter-spacing=".25" fill="#9da5b2" text-anchor="middle">05-08</text><line x1="293.5" y1="170.4" x2="293.5" y2="175.4" stroke="#e3e5ea" stroke-width="1"/><text x="292.6" y="188.4" font-size="11" letter-spacing=".25" fill="#9da5b2" text-anchor="middle">11:45</text><text x="292.6" y="199.4" font-size="11" letter-spacing=".25" fill="#9da5b2" text-anchor="middle">05-08</text><line x1="342.5" y1="170.4" x2="342.5" y2="175.4" stroke="#e3e5ea" stroke-width="1"/><text x="342.1" y="188.4" font-size="11" letter-spacing=".25" fill="#9da5b2" text-anchor="middle">11:48</text><text x="342.1" y="199.4" font-size="11" letter-spacing=".25" fill="#9da5b2" text-anchor="middle">05-08</text><line x1="392.5" y1="170.4" x2="392.5" y2="175.4" stroke="#e3e5ea" stroke-width="1"/><text x="391.5" y="188.4" font-size="11" letter-spacing=".25" fill="#9da5b2" text-anchor="middle">11:51</text><text x="391.5" y="199.4" font-size="11" letter-spacing=".25" fill="#9da5b2" text-anchor="middle">05-08</text><line x1="441.5" y1="170.4" x2="441.5" y2="175.4" stroke="#e3e5ea" stroke-width="1"/><text x="441.0" y="188.4" font-size="11" letter-spacing=".25" fill="#9da5b2" text-anchor="middle">11:54</text><text x="441.0" y="199.4" font-size="11" letter-spacing=".25" fill="#9da5b2" text-anchor="middle">05-08</text><line x1="490.5" y1="170.4" x2="490.5" y2="175.4" stroke="#e3e5ea" stroke-width="1"/><text x="490.4" y="188.4" font-size="11" letter-spacing=".25" fill="#9da5b2" text-anchor="middle">11:57</text><text x="490.4" y="199.4" font-size="11" letter-spacing=".25" fill="#9da5b2" text-anchor="middle">05-08</text><line x1="540.5" y1="170.4" x2="540.5" y2="175.4" stroke="#e3e5ea" stroke-width="1"/><text x="539.9" y="188.4" font-size="11" letter-spacing=".25" fill="#9da5b2" text-anchor="middle">12:00</text><text x="539.9" y="199.4" font-size="11" letter-spacing=".25" fill="#9da5b2" text-anchor="middle">05-08</text><polyline points="45.3,170.4 61.8,170.4 78.3,170.4 94.8,170.4 111.3,170.4 127.8,170.4 144.2,170.4 160.7,170.4 177.2,170.4 193.7,170.4 210.2,170.4 226.7,50.5 243.1,170.4 259.6,50.5 276.1,170.4 292.6,50.5 309.1,170.4 325.6,170.4 342.1,170.4 358.5,50.5 375.0,50.5 391.5,170.4 408.0,170.4 424.5,50.5 441.0,170.4 457.4,170.4 473.9,170.4 490.4,170.4 506.9,50.5 523.4,50.5 539.9,50.5" fill="none" stroke="#5d9dd6" stroke-width="1.6" stroke-linejoin="round"/></svg></div>
<div class="panel" style="left:10.0px;top:330.0px;width:760.3px;height:210px"><div class="ph">Service Load (calls / min)</div><svg class="a" style="right:6px;top:8px" width="13" height="13" viewBox="0 0 13 13"><circle cx="6.5" cy="6.5" r="5.5" fill="none" stroke="#3d444f" stroke-width="1.3"/><rect x="5.8" y="3.1" width="1.4" height="1.3" rx=".3" fill="#3d444f"/><rect x="5.8" y="5.2" width="1.4" height="4.6" rx=".3" fill="#3d444f"/></svg><svg class="a" style="left:0;top:0" width="760.3" height="210"><line x1="30.8" y1="50.5" x2="740.3" y2="50.5" stroke="#ebebeb" stroke-width="1" stroke-dasharray="4 2"/><text x="23.6" y="54.5" font-size="11" letter-spacing=".25" fill="#9da5b2" text-anchor="end">70</text><line x1="30.8" y1="67.6" x2="740.3" y2="67.6" stroke="#ebebeb" stroke-width="1" stroke-dasharray="4 2"/><text x="23.6" y="71.6" font-size="11" letter-spacing=".25" fill="#9da5b2" text-anchor="end">60</text><line x1="30.8" y1="84.7" x2="740.3" y2="84.7" stroke="#ebebeb" stroke-width="1" stroke-dasharray="4 2"/><text x="23.6" y="88.7" font-size="11" letter-spacing=".25" fill="#9da5b2" text-anchor="end">50</text><line x1="30.8" y1="101.8" x2="740.3" y2="101.8" stroke="#ebebeb" stroke-width="1" stroke-dasharray="4 2"/><text x="23.6" y="105.8" font-size="11" letter-spacing=".25" fill="#9da5b2" text-anchor="end">40</text><line x1="30.8" y1="118.8" x2="740.3" y2="118.8" stroke="#ebebeb" stroke-width="1" stroke-dasharray="4 2"/><text x="23.6" y="122.8" font-size="11" letter-spacing=".25" fill="#9da5b2" text-anchor="end">30</text><line x1="30.8" y1="135.9" x2="740.3" y2="135.9" stroke="#ebebeb" stroke-width="1" stroke-dasharray="4 2"/><text x="23.6" y="139.9" font-size="11" letter-spacing=".25" fill="#9da5b2" text-anchor="end">20</text><line x1="30.8" y1="153.0" x2="740.3" y2="153.0" stroke="#ebebeb" stroke-width="1" stroke-dasharray="4 2"/><text x="23.6" y="157.0" font-size="11" letter-spacing=".25" fill="#9da5b2" text-anchor="end">10</text><line x1="30.8" y1="170.1" x2="740.3" y2="170.1" stroke="#ebebeb" stroke-width="1" stroke-dasharray="4 2"/><text x="23.6" y="174.1" font-size="11" letter-spacing=".25" fill="#9da5b2" text-anchor="end">0</text><line x1="42.5" y1="170.1" x2="42.5" y2="175.1" stroke="#e3e5ea" stroke-width="1"/><text x="42.2" y="188.1" font-size="11" letter-spacing=".25" fill="#9da5b2" text-anchor="middle">11:30</text><text x="42.2" y="199.1" font-size="11" letter-spacing=".25" fill="#9da5b2" text-anchor="middle">05-08</text><line x1="88.5" y1="170.1" x2="88.5" y2="175.1" stroke="#e3e5ea" stroke-width="1"/><text x="88.0" y="188.1" font-size="11" letter-spacing=".25" fill="#9da5b2" text-anchor="middle">11:32</text><text x="88.0" y="199.1" font-size="11" letter-spacing=".25" fill="#9da5b2" text-anchor="middle">05-08</text><line x1="134.5" y1="170.1" x2="134.5" y2="175.1" stroke="#e3e5ea" stroke-width="1"/><text x="133.8" y="188.1" font-size="11" letter-spacing=".25" fill="#9da5b2" text-anchor="middle">11:34</text><text x="133.8" y="199.1" font-size="11" letter-spacing=".25" fill="#9da5b2" text-anchor="middle">05-08</text><line x1="180.5" y1="170.1" x2="180.5" y2="175.1" stroke="#e3e5ea" stroke-width="1"/><text x="179.6" y="188.1" font-size="11" letter-spacing=".25" fill="#9da5b2" text-anchor="middle">11:36</text><text x="179.6" y="199.1" font-size="11" letter-spacing=".25" fill="#9da5b2" text-anchor="middle">05-08</text><line x1="225.5" y1="170.1" x2="225.5" y2="175.1" stroke="#e3e5ea" stroke-width="1"/><text x="225.3" y="188.1" font-size="11" letter-spacing=".25" fill="#9da5b2" text-anchor="middle">11:38</text><text x="225.3" y="199.1" font-size="11" letter-spacing=".25" fill="#9da5b2" text-anchor="middle">05-08</text><line x1="271.5" y1="170.1" x2="271.5" y2="175.1" stroke="#e3e5ea" stroke-width="1"/><text x="271.1" y="188.1" font-size="11" letter-spacing=".25" fill="#9da5b2" text-anchor="middle">11:40</text><text x="271.1" y="199.1" font-size="11" letter-spacing=".25" fill="#9da5b2" text-anchor="middle">05-08</text><line x1="317.5" y1="170.1" x2="317.5" y2="175.1" stroke="#e3e5ea" stroke-width="1"/><text x="316.9" y="188.1" font-size="11" letter-spacing=".25" fill="#9da5b2" text-anchor="middle">11:42</text><text x="316.9" y="199.1" font-size="11" letter-spacing=".25" fill="#9da5b2" text-anchor="middle">05-08</text><line x1="363.5" y1="170.1" x2="363.5" y2="175.1" stroke="#e3e5ea" stroke-width="1"/><text x="362.7" y="188.1" font-size="11" letter-spacing=".25" fill="#9da5b2" text-anchor="middle">11:44</text><text x="362.7" y="199.1" font-size="11" letter-spacing=".25" fill="#9da5b2" text-anchor="middle">05-08</text><line x1="408.5" y1="170.1" x2="408.5" y2="175.1" stroke="#e3e5ea" stroke-width="1"/><text x="408.4" y="188.1" font-size="11" letter-spacing=".25" fill="#9da5b2" text-anchor="middle">11:46</text><text x="408.4" y="199.1" font-size="11" letter-spacing=".25" fill="#9da5b2" text-anchor="middle">05-08</text><line x1="454.5" y1="170.1" x2="454.5" y2="175.1" stroke="#e3e5ea" stroke-width="1"/><text x="454.2" y="188.1" font-size="11" letter-spacing=".25" fill="#9da5b2" text-anchor="middle">11:48</text><text x="454.2" y="199.1" font-size="11" letter-spacing=".25" fill="#9da5b2" text-anchor="middle">05-08</text><line x1="500.5" y1="170.1" x2="500.5" y2="175.1" stroke="#e3e5ea" stroke-width="1"/><text x="500.0" y="188.1" font-size="11" letter-spacing=".25" fill="#9da5b2" text-anchor="middle">11:50</text><text x="500.0" y="199.1" font-size="11" letter-spacing=".25" fill="#9da5b2" text-anchor="middle">05-08</text><line x1="546.5" y1="170.1" x2="546.5" y2="175.1" stroke="#e3e5ea" stroke-width="1"/><text x="545.8" y="188.1" font-size="11" letter-spacing=".25" fill="#9da5b2" text-anchor="middle">11:52</text><text x="545.8" y="199.1" font-size="11" letter-spacing=".25" fill="#9da5b2" text-anchor="middle">05-08</text><line x1="592.5" y1="170.1" x2="592.5" y2="175.1" stroke="#e3e5ea" stroke-width="1"/><text x="591.5" y="188.1" font-size="11" letter-spacing=".25" fill="#9da5b2" text-anchor="middle">11:54</text><text x="591.5" y="199.1" font-size="11" letter-spacing=".25" fill="#9da5b2" text-anchor="middle">05-08</text><line x1="637.5" y1="170.1" x2="637.5" y2="175.1" stroke="#e3e5ea" stroke-width="1"/><text x="637.3" y="188.1" font-size="11" letter-spacing=".25" fill="#9da5b2" text-anchor="middle">11:56</text><text x="637.3" y="199.1" font-size="11" letter-spacing=".25" fill="#9da5b2" text-anchor="middle">05-08</text><line x1="683.5" y1="170.1" x2="683.5" y2="175.1" stroke="#e3e5ea" stroke-width="1"/><text x="683.1" y="188.1" font-size="11" letter-spacing=".25" fill="#9da5b2" text-anchor="middle">11:58</text><text x="683.1" y="199.1" font-size="11" letter-spacing=".25" fill="#9da5b2" text-anchor="middle">05-08</text><line x1="729.5" y1="170.1" x2="729.5" y2="175.1" stroke="#e3e5ea" stroke-width="1"/><text x="728.9" y="188.1" font-size="11" letter-spacing=".25" fill="#9da5b2" text-anchor="middle">12:00</text><text x="728.9" y="199.1" font-size="11" letter-spacing=".25" fill="#9da5b2" text-anchor="middle">05-08</text><polyline points="42.2,170.1 65.1,170.1 88.0,170.1 110.9,170.1 133.8,170.1 156.7,170.1 179.6,170.1 202.5,170.1 225.3,170.1 248.2,170.1 271.1,170.1 294.0,168.0 316.9,170.1 339.8,166.2 362.7,170.1 385.5,153.0 408.4,170.1 431.3,170.1 454.2,170.1 477.1,166.2 500.0,166.2 522.9,170.1 545.8,170.1 568.6,55.6 591.5,170.1 614.4,170.1 637.3,170.1 660.2,170.1 683.1,149.1 706.0,101.8 728.9,152.2" fill="none" stroke="#5d9dd6" stroke-width="1.6" stroke-linejoin="round"/></svg></div>
<div class="panel" style="left:780.0px;top:330.0px;width:760.3px;height:210px"><div class="ph">Message Queue Consuming Count</div><svg class="a" style="left:0;top:0" width="760.3" height="210"><line x1="33.1" y1="50.5" x2="739.5" y2="50.5" stroke="#ebebeb" stroke-width="1" stroke-dasharray="4 2"/><text x="25.9" y="54.5" font-size="11" letter-spacing=".25" fill="#9da5b2" text-anchor="end">1</text><line x1="33.1" y1="74.4" x2="739.5" y2="74.4" stroke="#ebebeb" stroke-width="1" stroke-dasharray="4 2"/><text x="25.9" y="78.4" font-size="11" letter-spacing=".25" fill="#9da5b2" text-anchor="end">0.8</text><line x1="33.1" y1="98.3" x2="739.5" y2="98.3" stroke="#ebebeb" stroke-width="1" stroke-dasharray="4 2"/><text x="25.9" y="102.3" font-size="11" letter-spacing=".25" fill="#9da5b2" text-anchor="end">0.6</text><line x1="33.1" y1="122.3" x2="739.5" y2="122.3" stroke="#ebebeb" stroke-width="1" stroke-dasharray="4 2"/><text x="25.9" y="126.3" font-size="11" letter-spacing=".25" fill="#9da5b2" text-anchor="end">0.4</text><line x1="33.1" y1="146.2" x2="739.5" y2="146.2" stroke="#ebebeb" stroke-width="1" stroke-dasharray="4 2"/><text x="25.9" y="150.2" font-size="11" letter-spacing=".25" fill="#9da5b2" text-anchor="end">0.2</text><line x1="33.1" y1="170.1" x2="739.5" y2="170.1" stroke="#ebebeb" stroke-width="1" stroke-dasharray="4 2"/><text x="25.9" y="174.1" font-size="11" letter-spacing=".25" fill="#9da5b2" text-anchor="end">0</text><line x1="44.5" y1="170.1" x2="44.5" y2="175.1" stroke="#e3e5ea" stroke-width="1"/><text x="44.5" y="188.1" font-size="11" letter-spacing=".25" fill="#9da5b2" text-anchor="middle">11:30</text><text x="44.5" y="199.1" font-size="11" letter-spacing=".25" fill="#9da5b2" text-anchor="middle">05-08</text><line x1="90.5" y1="170.1" x2="90.5" y2="175.1" stroke="#e3e5ea" stroke-width="1"/><text x="90.1" y="188.1" font-size="11" letter-spacing=".25" fill="#9da5b2" text-anchor="middle">11:32</text><text x="90.1" y="199.1" font-size="11" letter-spacing=".25" fill="#9da5b2" text-anchor="middle">05-08</text><line x1="136.5" y1="170.1" x2="136.5" y2="175.1" stroke="#e3e5ea" stroke-width="1"/><text x="135.6" y="188.1" font-size="11" letter-spacing=".25" fill="#9da5b2" text-anchor="middle">11:34</text><text x="135.6" y="199.1" font-size="11" letter-spacing=".25" fill="#9da5b2" text-anchor="middle">05-08</text><line x1="181.5" y1="170.1" x2="181.5" y2="175.1" stroke="#e3e5ea" stroke-width="1"/><text x="181.2" y="188.1" font-size="11" letter-spacing=".25" fill="#9da5b2" text-anchor="middle">11:36</text><text x="181.2" y="199.1" font-size="11" letter-spacing=".25" fill="#9da5b2" text-anchor="middle">05-08</text><line x1="227.5" y1="170.1" x2="227.5" y2="175.1" stroke="#e3e5ea" stroke-width="1"/><text x="226.8" y="188.1" font-size="11" letter-spacing=".25" fill="#9da5b2" text-anchor="middle">11:38</text><text x="226.8" y="199.1" font-size="11" letter-spacing=".25" fill="#9da5b2" text-anchor="middle">05-08</text><line x1="272.5" y1="170.1" x2="272.5" y2="175.1" stroke="#e3e5ea" stroke-width="1"/><text x="272.4" y="188.1" font-size="11" letter-spacing=".25" fill="#9da5b2" text-anchor="middle">11:40</text><text x="272.4" y="199.1" font-size="11" letter-spacing=".25" fill="#9da5b2" text-anchor="middle">05-08</text><line x1="318.5" y1="170.1" x2="318.5" y2="175.1" stroke="#e3e5ea" stroke-width="1"/><text x="317.9" y="188.1" font-size="11" letter-spacing=".25" fill="#9da5b2" text-anchor="middle">11:42</text><text x="317.9" y="199.1" font-size="11" letter-spacing=".25" fill="#9da5b2" text-anchor="middle">05-08</text><line x1="364.5" y1="170.1" x2="364.5" y2="175.1" stroke="#e3e5ea" stroke-width="1"/><text x="363.5" y="188.1" font-size="11" letter-spacing=".25" fill="#9da5b2" text-anchor="middle">11:44</text><text x="363.5" y="199.1" font-size="11" letter-spacing=".25" fill="#9da5b2" text-anchor="middle">05-08</text><line x1="409.5" y1="170.1" x2="409.5" y2="175.1" stroke="#e3e5ea" stroke-width="1"/><text x="409.1" y="188.1" font-size="11" letter-spacing=".25" fill="#9da5b2" text-anchor="middle">11:46</text><text x="409.1" y="199.1" font-size="11" letter-spacing=".25" fill="#9da5b2" text-anchor="middle">05-08</text><line x1="455.5" y1="170.1" x2="455.5" y2="175.1" stroke="#e3e5ea" stroke-width="1"/><text x="454.7" y="188.1" font-size="11" letter-spacing=".25" fill="#9da5b2" text-anchor="middle">11:48</text><text x="454.7" y="199.1" font-size="11" letter-spacing=".25" fill="#9da5b2" text-anchor="middle">05-08</text><line x1="500.5" y1="170.1" x2="500.5" y2="175.1" stroke="#e3e5ea" stroke-width="1"/><text x="500.2" y="188.1" font-size="11" letter-spacing=".25" fill="#9da5b2" text-anchor="middle">11:50</text><text x="500.2" y="199.1" font-size="11" letter-spacing=".25" fill="#9da5b2" text-anchor="middle">05-08</text><line x1="546.5" y1="170.1" x2="546.5" y2="175.1" stroke="#e3e5ea" stroke-width="1"/><text x="545.8" y="188.1" font-size="11" letter-spacing=".25" fill="#9da5b2" text-anchor="middle">11:52</text><text x="545.8" y="199.1" font-size="11" letter-spacing=".25" fill="#9da5b2" text-anchor="middle">05-08</text><line x1="591.5" y1="170.1" x2="591.5" y2="175.1" stroke="#e3e5ea" stroke-width="1"/><text x="591.4" y="188.1" font-size="11" letter-spacing=".25" fill="#9da5b2" text-anchor="middle">11:54</text><text x="591.4" y="199.1" font-size="11" letter-spacing=".25" fill="#9da5b2" text-anchor="middle">05-08</text><line x1="637.5" y1="170.1" x2="637.5" y2="175.1" stroke="#e3e5ea" stroke-width="1"/><text x="637.0" y="188.1" font-size="11" letter-spacing=".25" fill="#9da5b2" text-anchor="middle">11:56</text><text x="637.0" y="199.1" font-size="11" letter-spacing=".25" fill="#9da5b2" text-anchor="middle">05-08</text><line x1="683.5" y1="170.1" x2="683.5" y2="175.1" stroke="#e3e5ea" stroke-width="1"/><text x="682.5" y="188.1" font-size="11" letter-spacing=".25" fill="#9da5b2" text-anchor="middle">11:58</text><text x="682.5" y="199.1" font-size="11" letter-spacing=".25" fill="#9da5b2" text-anchor="middle">05-08</text><line x1="728.5" y1="170.1" x2="728.5" y2="175.1" stroke="#e3e5ea" stroke-width="1"/><text x="728.1" y="188.1" font-size="11" letter-spacing=".25" fill="#9da5b2" text-anchor="middle">12:00</text><text x="728.1" y="199.1" font-size="11" letter-spacing=".25" fill="#9da5b2" text-anchor="middle">05-08</text><polyline points="44.5,170.1 67.3,170.1 90.1,170.1 112.9,170.1 135.6,170.1 158.4,170.1 181.2,170.1 204.0,170.1 226.8,170.1 249.6,170.1 272.4,170.1 295.2,170.1 317.9,170.1 340.7,170.1 363.5,170.1 386.3,170.1 409.1,170.1 431.9,170.1 454.7,170.1 477.4,170.1 500.2,170.1 523.0,170.1 545.8,170.1 568.6,170.1 591.4,170.1 614.2,170.1 637.0,170.1 659.7,170.1 682.5,170.1 705.3,170.1 728.1,170.1" fill="none" stroke="#5d9dd6" stroke-width="1.6" stroke-linejoin="round"/></svg></div>
<div class="panel" style="left:1551.0px;top:330.0px;width:760.3px;height:210px"><div class="ph">Message Queue Avg Consuming Latency (ms)</div><svg class="a" style="right:6px;top:8px" width="13" height="13" viewBox="0 0 13 13"><circle cx="6.5" cy="6.5" r="5.5" fill="none" stroke="#3d444f" stroke-width="1.3"/><rect x="5.8" y="3.1" width="1.4" height="1.3" rx=".3" fill="#3d444f"/><rect x="5.8" y="5.2" width="1.4" height="4.6" rx=".3" fill="#3d444f"/></svg><svg class="a" style="left:0;top:0" width="760.3" height="210"><line x1="33.1" y1="50.5" x2="739.5" y2="50.5" stroke="#ebebeb" stroke-width="1" stroke-dasharray="4 2"/><text x="25.9" y="54.5" font-size="11" letter-spacing=".25" fill="#9da5b2" text-anchor="end">1</text><line x1="33.1" y1="74.4" x2="739.5" y2="74.4" stroke="#ebebeb" stroke-width="1" stroke-dasharray="4 2"/><text x="25.9" y="78.4" font-size="11" letter-spacing=".25" fill="#9da5b2" text-anchor="end">0.8</text><line x1="33.1" y1="98.3" x2="739.5" y2="98.3" stroke="#ebebeb" stroke-width="1" stroke-dasharray="4 2"/><text x="25.9" y="102.3" font-size="11" letter-spacing=".25" fill="#9da5b2" text-anchor="end">0.6</text><line x1="33.1" y1="122.3" x2="739.5" y2="122.3" stroke="#ebebeb" stroke-width="1" stroke-dasharray="4 2"/><text x="25.9" y="126.3" font-size="11" letter-spacing=".25" fill="#9da5b2" text-anchor="end">0.4</text><line x1="33.1" y1="146.2" x2="739.5" y2="146.2" stroke="#ebebeb" stroke-width="1" stroke-dasharray="4 2"/><text x="25.9" y="150.2" font-size="11" letter-spacing=".25" fill="#9da5b2" text-anchor="end">0.2</text><line x1="33.1" y1="170.1" x2="739.5" y2="170.1" stroke="#ebebeb" stroke-width="1" stroke-dasharray="4 2"/><text x="25.9" y="174.1" font-size="11" letter-spacing=".25" fill="#9da5b2" text-anchor="end">0</text><line x1="44.5" y1="170.1" x2="44.5" y2="175.1" stroke="#e3e5ea" stroke-width="1"/><text x="44.5" y="188.1" font-size="11" letter-spacing=".25" fill="#9da5b2" text-anchor="middle">11:30</text><text x="44.5" y="199.1" font-size="11" letter-spacing=".25" fill="#9da5b2" text-anchor="middle">05-08</text><line x1="90.5" y1="170.1" x2="90.5" y2="175.1" stroke="#e3e5ea" stroke-width="1"/><text x="90.1" y="188.1" font-size="11" letter-spacing=".25" fill="#9da5b2" text-anchor="middle">11:32</text><text x="90.1" y="199.1" font-size="11" letter-spacing=".25" fill="#9da5b2" text-anchor="middle">05-08</text><line x1="136.5" y1="170.1" x2="136.5" y2="175.1" stroke="#e3e5ea" stroke-width="1"/><text x="135.6" y="188.1" font-size="11" letter-spacing=".25" fill="#9da5b2" text-anchor="middle">11:34</text><text x="135.6" y="199.1" font-size="11" letter-spacing=".25" fill="#9da5b2" text-anchor="middle">05-08</text><line x1="181.5" y1="170.1" x2="181.5" y2="175.1" stroke="#e3e5ea" stroke-width="1"/><text x="181.2" y="188.1" font-size="11" letter-spacing=".25" fill="#9da5b2" text-anchor="middle">11:36</text><text x="181.2" y="199.1" font-size="11" letter-spacing=".25" fill="#9da5b2" text-anchor="middle">05-08</text><line x1="227.5" y1="170.1" x2="227.5" y2="175.1" stroke="#e3e5ea" stroke-width="1"/><text x="226.8" y="188.1" font-size="11" letter-spacing=".25" fill="#9da5b2" text-anchor="middle">11:38</text><text x="226.8" y="199.1" font-size="11" letter-spacing=".25" fill="#9da5b2" text-anchor="middle">05-08</text><line x1="272.5" y1="170.1" x2="272.5" y2="175.1" stroke="#e3e5ea" stroke-width="1"/><text x="272.4" y="188.1" font-size="11" letter-spacing=".25" fill="#9da5b2" text-anchor="middle">11:40</text><text x="272.4" y="199.1" font-size="11" letter-spacing=".25" fill="#9da5b2" text-anchor="middle">05-08</text><line x1="318.5" y1="170.1" x2="318.5" y2="175.1" stroke="#e3e5ea" stroke-width="1"/><text x="317.9" y="188.1" font-size="11" letter-spacing=".25" fill="#9da5b2" text-anchor="middle">11:42</text><text x="317.9" y="199.1" font-size="11" letter-spacing=".25" fill="#9da5b2" text-anchor="middle">05-08</text><line x1="364.5" y1="170.1" x2="364.5" y2="175.1" stroke="#e3e5ea" stroke-width="1"/><text x="363.5" y="188.1" font-size="11" letter-spacing=".25" fill="#9da5b2" text-anchor="middle">11:44</text><text x="363.5" y="199.1" font-size="11" letter-spacing=".25" fill="#9da5b2" text-anchor="middle">05-08</text><line x1="409.5" y1="170.1" x2="409.5" y2="175.1" stroke="#e3e5ea" stroke-width="1"/><text x="409.1" y="188.1" font-size="11" letter-spacing=".25" fill="#9da5b2" text-anchor="middle">11:46</text><text x="409.1" y="199.1" font-size="11" letter-spacing=".25" fill="#9da5b2" text-anchor="middle">05-08</text><line x1="455.5" y1="170.1" x2="455.5" y2="175.1" stroke="#e3e5ea" stroke-width="1"/><text x="454.7" y="188.1" font-size="11" letter-spacing=".25" fill="#9da5b2" text-anchor="middle">11:48</text><text x="454.7" y="199.1" font-size="11" letter-spacing=".25" fill="#9da5b2" text-anchor="middle">05-08</text><line x1="500.5" y1="170.1" x2="500.5" y2="175.1" stroke="#e3e5ea" stroke-width="1"/><text x="500.2" y="188.1" font-size="11" letter-spacing=".25" fill="#9da5b2" text-anchor="middle">11:50</text><text x="500.2" y="199.1" font-size="11" letter-spacing=".25" fill="#9da5b2" text-anchor="middle">05-08</text><line x1="546.5" y1="170.1" x2="546.5" y2="175.1" stroke="#e3e5ea" stroke-width="1"/><text x="545.8" y="188.1" font-size="11" letter-spacing=".25" fill="#9da5b2" text-anchor="middle">11:52</text><text x="545.8" y="199.1" font-size="11" letter-spacing=".25" fill="#9da5b2" text-anchor="middle">05-08</text><line x1="591.5" y1="170.1" x2="591.5" y2="175.1" stroke="#e3e5ea" stroke-width="1"/><text x="591.4" y="188.1" font-size="11" letter-spacing=".25" fill="#9da5b2" text-anchor="middle">11:54</text><text x="591.4" y="199.1" font-size="11" letter-spacing=".25" fill="#9da5b2" text-anchor="middle">05-08</text><line x1="637.5" y1="170.1" x2="637.5" y2="175.1" stroke="#e3e5ea" stroke-width="1"/><text x="637.0" y="188.1" font-size="11" letter-spacing=".25" fill="#9da5b2" text-anchor="middle">11:56</text><text x="637.0" y="199.1" font-size="11" letter-spacing=".25" fill="#9da5b2" text-anchor="middle">05-08</text><line x1="683.5" y1="170.1" x2="683.5" y2="175.1" stroke="#e3e5ea" stroke-width="1"/><text x="682.5" y="188.1" font-size="11" letter-spacing=".25" fill="#9da5b2" text-anchor="middle">11:58</text><text x="682.5" y="199.1" font-size="11" letter-spacing=".25" fill="#9da5b2" text-anchor="middle">05-08</text><line x1="728.5" y1="170.1" x2="728.5" y2="175.1" stroke="#e3e5ea" stroke-width="1"/><text x="728.1" y="188.1" font-size="11" letter-spacing=".25" fill="#9da5b2" text-anchor="middle">12:00</text><text x="728.1" y="199.1" font-size="11" letter-spacing=".25" fill="#9da5b2" text-anchor="middle">05-08</text><line x1="204.5" y1="50.5" x2="204.5" y2="170.1" stroke="#a3a9b5" stroke-width="1" stroke-dasharray="4 2"/><polyline points="44.5,170.1 67.3,170.1 90.1,170.1 112.9,170.1 135.6,170.1 158.4,170.1 181.2,170.1 204.0,170.1 226.8,170.1 249.6,170.1 272.4,170.1 295.2,170.1 317.9,170.1 340.7,170.1 363.5,170.1 386.3,170.1 409.1,170.1 431.9,170.1 454.7,170.1 477.4,170.1 500.2,170.1 523.0,170.1 545.8,170.1 568.6,170.1 591.4,170.1 614.2,170.1 637.0,170.1 659.7,170.1 682.5,170.1 705.3,170.1 728.1,170.1" fill="none" stroke="#5d9dd6" stroke-width="1.6" stroke-linejoin="round"/><circle cx="204.0" cy="170.1" r="3.5" fill="#5d9dd6" stroke="#fff" stroke-width="1"/></svg></div>
<div class="panel" style="left:10.0px;top:550.0px;width:760.3px;height:270px"><div class="ph">Service Instances Load (calls / min)</div><svg class="a" style="right:6px;top:8px" width="13" height="13" viewBox="0 0 13 13"><circle cx="6.5" cy="6.5" r="5.5" fill="none" stroke="#3d444f" stroke-width="1.3"/><rect x="5.8" y="3.1" width="1.4" height="1.3" rx=".3" fill="#3d444f"/><rect x="5.8" y="5.2" width="1.4" height="4.6" rx=".3" fill="#3d444f"/></svg><div class="badge" style="left:20.0px;top:51.0px">0.16</div><div class="itxt" style="left:63.9px;top:51.0px">2905b05eae4e4ae3a2a5b538ce8c2846@172.19.18.164</div><div class="track" style="left:20.0px;top:70.0px;width:719.8px"></div><div class="bar" style="left:20.0px;top:70.0px;width:719.8px"></div><svg class="a" style="left:724.0px;top:52.0px" width="14" height="17" viewBox="0 0 14 17"><rect x="1.3" y="2.3" width="11.4" height="13.2" rx="2.4" fill="none" stroke="#2f3a4b" stroke-width="2.1"/><path d="M3.6 1.5H5.8L6.8 .3L7.8 1.5H10.2L9.9 3.6H3.9Z" fill="#2f3a4b"/><rect x="4.1" y="6.7" width="4.9" height="1.2" rx=".5" fill="#2f3a4b"/><rect x="4.1" y="8.8" width="5.8" height="1.2" rx=".5" fill="#2f3a4b"/><rect x="4.1" y="11" width="3.6" height="1.2" rx=".5" fill="#2f3a4b"/></svg></div>
<div class="panel" style="left:780.0px;top:550.0px;width:760.3px;height:270px"><div class="ph">Slow Service Instance (ms)</div><div class="badge" style="left:20.0px;top:51.0px">3.50</div><div class="itxt" style="left:63.9px;top:51.0px">2905b05eae4e4ae3a2a5b538ce8c2846@172.19.18.164</div><div class="track" style="left:20.0px;top:70.0px;width:719.8px"></div><div class="bar" style="left:20.0px;top:70.0px;width:719.8px"></div><svg class="a" style="left:724.0px;top:52.0px" width="14" height="17" viewBox="0 0 14 17"><rect x="1.3" y="2.3" width="11.4" height="13.2" rx="2.4" fill="none" stroke="#2f3a4b" stroke-width="2.1"/><path d="M3.6 1.5H5.8L6.8 .3L7.8 1.5H10.2L9.9 3.6H3.9Z" fill="#2f3a4b"/><rect x="4.1" y="6.7" width="4.9" height="1.2" rx=".5" fill="#2f3a4b"/><rect x="4.1" y="8.8" width="5.8" height="1.2" rx=".5" fill="#2f3a4b"/><rect x="4.1" y="11" width="3.6" height="1.2" rx=".5" fill="#2f3a4b"/></svg></div>
<div class="panel" style="left:1551.0px;top:550.0px;width:760.3px;height:270px"><div class="ph">Service Instance Success Rate (%)</div><div class="badge" style="left:20.0px;top:51.0px">100.00</div><div class="itxt" style="left:77.2px;top:51.0px">2905b05eae4e4ae3a2a5b538ce8c2846@172.19.18.164</div><div class="track" style="left:20.0px;top:70.0px;width:719.8px"></div><div class="bar" style="left:20.0px;top:70.0px;width:719.8px"></div><svg class="a" style="left:724.0px;top:52.0px" width="14" height="17" viewBox="0 0 14 17"><rect x="1.3" y="2.3" width="11.4" height="13.2" rx="2.4" fill="none" stroke="#2f3a4b" stroke-width="2.1"/><path d="M3.6 1.5H5.8L6.8 .3L7.8 1.5H10.2L9.9 3.6H3.9Z" fill="#2f3a4b"/><rect x="4.1" y="6.7" width="4.9" height="1.2" rx=".5" fill="#2f3a4b"/><rect x="4.1" y="8.8" width="5.8" height="1.2" rx=".5" fill="#2f3a4b"/><rect x="4.1" y="11" width="3.6" height="1.2" rx=".5" fill="#2f3a4b"/></svg></div>
<div class="panel" style="left:10.0px;top:830.0px;width:760.3px;height:270px"><div class="ph">Endpoint Load in Current Service (calls / min)</div><svg class="a" style="right:6px;top:8px" width="13" height="13" viewBox="0 0 13 13"><circle cx="6.5" cy="6.5" r="5.5" fill="none" stroke="#3d444f" stroke-width="1.3"/><rect x="5.8" y="3.1" width="1.4" height="1.3" rx=".3" fill="#3d444f"/><rect x="5.8" y="5.2" width="1.4" height="4.6" rx=".3" fill="#3d444f"/></svg><div class="badge" style="left:20.0px;top:51.0px">10</div><div class="itxt" style="left:53.8px;top:51.0px">/grpc/clientStreamingFun</div><div class="track" style="left:20.0px;top:70.0px;width:702.8px"></div><div class="bar" style="left:20.0px;top:70.0px;width:702.8px"></div><svg class="a" style="left:707.0px;top:52.0px" width="14" height="17" viewBox="0 0 14 17"><rect x="1.3" y="2.3" width="11.4" height="13.2" rx="2.4" fill="none" stroke="#2f3a4b" stroke-width="2.1"/><path d="M3.6 1.5H5.8L6.8 .3L7.8 1.5H10.2L9.9 3.6H3.9Z" fill="#2f3a4b"/><rect x="4.1" y="6.7" width="4.9" height="1.2" rx=".5" fill="#2f3a4b"/><rect x="4.1" y="8.8" width="5.8" height="1.2" rx=".5" fill="#2f3a4b"/><rect x="4.1" y="11" width="3.6" height="1.2" rx=".5" fill="#2f3a4b"/></svg><div class="badge" style="left:20.0px;top:88.0px">9.1666666667</div><div class="itxt" style="left:117.2px;top:88.0px">/order/findById</div><div class="track" style="left:20.0px;top:107.0px;width:702.8px"></div><div class="bar" style="left:20.0px;top:107.0px;width:644.2px"></div><svg class="a" style="left:707.0px;top:89.0px" width="14" height="17" viewBox="0 0 14 17"><rect x="1.3" y="2.3" width="11.4" height="13.2" rx="2.4" fill="none" stroke="#2f3a4b" stroke-width="2.1"/><path d="M3.6 1.5H5.8L6.8 .3L7.8 1.5H10.2L9.9 3.6H3.9Z" fill="#2f3a4b"/><rect x="4.1" y="6.7" width="4.9" height="1.2" rx=".5" fill="#2f3a4b"/><rect x="4.1" y="8.8" width="5.8" height="1.2" rx=".5" fill="#2f3a4b"/><rect x="4.1" y="11" width="3.6" height="1.2" rx=".5" fill="#2f3a4b"/></svg><div class="badge" style="left:20.0px;top:125.0px">9.1666666667</div><div class="itxt" style="left:117.2px;top:125.0px">/http/order/findById</div><div class="track" style="left:20.0px;top:144.0px;width:702.8px"></div><div class="bar" style="left:20.0px;top:144.0px;width:644.2px"></div><svg class="a" style="left:707.0px;top:126.0px" width="14" height="17" viewBox="0 0 14 17"><rect x="1.3" y="2.3" width="11.4" height="13.2" rx="2.4" fill="none" stroke="#2f3a4b" stroke-width="2.1"/><path d="M3.6 1.5H5.8L6.8 .3L7.8 1.5H10.2L9.9 3.6H3.9Z" fill="#2f3a4b"/><rect x="4.1" y="6.7" width="4.9" height="1.2" rx=".5" fill="#2f3a4b"/><rect x="4.1" y="8.8" width="5.8" height="1.2" rx=".5" fill="#2f3a4b"/><rect x="4.1" y="11" width="3.6" height="1.2" rx=".5" fill="#2f3a4b"/></svg><div class="a" style="left:733.3px;top:35px;width:17px;height:240px;background:#f1f1f1"></div><div class="a" style="left:735.3px;top:52px;width:13px;height:200px;background:#c1c1c1"></div><svg class="a" style="left:733.3px;top:38px" width="17" height="10"><path d="M4.5 7.5h8l-4-4z" fill="#a3a3a3"/></svg></div>
<div class="panel" style="left:780.0px;top:830.0px;width:760.3px;height:270px"><div class="ph">Slow Endpoints in Current Service (ms)</div><div class="badge" style="left:20.0px;top:51.0px">920</div><div class="itxt" style="left:60.5px;top:51.0px">/grpc/unaryFun</div><div class="track" style="left:20.0px;top:70.0px;width:702.8px"></div><div class="bar" style="left:20.0px;top:70.0px;width:702.8px"></div><svg class="a" style="left:707.0px;top:52.0px" width="14" height="17" viewBox="0 0 14 17"><rect x="1.3" y="2.3" width="11.4" height="13.2" rx="2.4" fill="none" stroke="#2f3a4b" stroke-width="2.1"/><path d="M3.6 1.5H5.8L6.8 .3L7.8 1.5H10.2L9.9 3.6H3.9Z" fill="#2f3a4b"/><rect x="4.1" y="6.7" width="4.9" height="1.2" rx=".5" fill="#2f3a4b"/><rect x="4.1" y="8.8" width="5.8" height="1.2" rx=".5" fill="#2f3a4b"/><rect x="4.1" y="11" width="3.6" height="1.2" rx=".5" fill="#2f3a4b"/></svg><div class="badge" style="left:20.0px;top:88.0px">715</div><div class="itxt" style="left:60.5px;top:88.0px">SofaRpcPlugin</div><div class="track" style="left:20.0px;top:107.0px;width:702.8px"></div><div class="bar" style="left:20.0px;top:107.0px;width:546.2px"></div><svg class="a" style="left:707.0px;top:89.0px" width="14" height="17" viewBox="0 0 14 17"><rect x="1.3" y="2.3" width="11.4" height="13.2" rx="2.4" fill="none" stroke="#2f3a4b" stroke-width="2.1"/><path d="M3.6 1.5H5.8L6.8 .3L7.8 1.5H10.2L9.9 3.6H3.9Z" fill="#2f3a4b"/><rect x="4.1" y="6.7" width="4.9" height="1.2" rx=".5" fill="#2f3a4b"/><rect x="4.1" y="8.8" width="5.8" height="1.2" rx=".5" fill="#2f3a4b"/><rect x="4.1" y="11" width="3.6" height="1.2" rx=".5" fill="#2f3a4b"/></svg><div class="badge" style="left:20.0px;top:125.0px">613.3333333333</div><div class="itxt" style="left:130.6px;top:125.0px">gRPCPlugin</div><div class="track" style="left:20.0px;top:144.0px;width:702.8px"></div><div class="bar" style="left:20.0px;top:144.0px;width:468.5px"></div><svg class="a" style="left:707.0px;top:126.0px" width="14" height="17" viewBox="0 0 14 17"><rect x="1.3" y="2.3" width="11.4" height="13.2" rx="2.4" fill="none" stroke="#2f3a4b" stroke-width="2.1"/><path d="M3.6 1.5H5.8L6.8 .3L7.8 1.5H10.2L9.9 3.6H3.9Z" fill="#2f3a4b"/><rect x="4.1" y="6.7" width="4.9" height="1.2" rx=".5" fill="#2f3a4b"/><rect x="4.1" y="8.8" width="5.8" height="1.2" rx=".5" fill="#2f3a4b"/><rect x="4.1" y="11" width="3.6" height="1.2" rx=".5" fill="#2f3a4b"/></svg><div class="a" style="left:733.3px;top:35px;width:17px;height:240px;background:#f1f1f1"></div><div class="a" style="left:735.3px;top:52px;width:13px;height:200px;background:#c1c1c1"></div><svg class="a" style="left:733.3px;top:38px" width="17" height="10"><path d="M4.5 7.5h8l-4-4z" fill="#a3a3a3"/></svg></div>
<div class="panel" style="left:1551.0px;top:830.0px;width:760.3px;height:270px"><div class="ph">Success Rate in Current Service (%)</div><div class="badge" style="left:20.0px;top:51.0px">100.00</div><div class="itxt" style="left:77.2px;top:51.0px">gRPCPlugin</div><div class="track" style="left:20.0px;top:70.0px;width:702.8px"></div><div class="bar" style="left:20.0px;top:70.0px;width:702.8px"></div><svg class="a" style="left:707.0px;top:52.0px" width="14" height="17" viewBox="0 0 14 17"><rect x="1.3" y="2.3" width="11.4" height="13.2" rx="2.4" fill="none" stroke="#2f3a4b" stroke-width="2.1"/><path d="M3.6 1.5H5.8L6.8 .3L7.8 1.5H10.2L9.9 3.6H3.9Z" fill="#2f3a4b"/><rect x="4.1" y="6.7" width="4.9" height="1.2" rx=".5" fill="#2f3a4b"/><rect x="4.1" y="8.8" width="5.8" height="1.2" rx=".5" fill="#2f3a4b"/><rect x="4.1" y="11" width="3.6" height="1.2" rx=".5" fill="#2f3a4b"/></svg><div class="badge" style="left:20.0px;top:88.0px">100.00</div><div class="itxt" style="left:77.2px;top:88.0px">SofaRpcPlugin</div><div class="track" style="left:20.0px;top:107.0px;width:702.8px"></div><div class="bar" style="left:20.0px;top:107.0px;width:702.8px"></div><svg class="a" style="left:707.0px;top:89.0px" width="14" height="17" viewBox="0 0 14 17"><rect x="1.3" y="2.3" width="11.4" height="13.2" rx="2.4" fill="none" stroke="#2f3a4b" stroke-width="2.1"/><path d="M3.6 1.5H5.8L6.8 .3L7.8 1.5H10.2L9.9 3.6H3.9Z" fill="#2f3a4b"/><rect x="4.1" y="6.7" width="4.9" height="1.2" rx=".5" fill="#2f3a4b"/><rect x="4.1" y="8.8" width="5.8" height="1.2" rx=".5" fill="#2f3a4b"/><rect x="4.1" y="11" width="3.6" height="1.2" rx=".5" fill="#2f3a4b"/></svg><div class="badge" style="left:20.0px;top:125.0px">100.00</div><div class="itxt" style="left:77.2px;top:125.0px">MotanRpcPlugin</div><div class="track" style="left:20.0px;top:144.0px;width:702.8px"></div><div class="bar" style="left:20.0px;top:144.0px;width:702.8px"></div><svg class="a" style="left:707.0px;top:126.0px" width="14" height="17" viewBox="0 0 14 17"><rect x="1.3" y="2.3" width="11.4" height="13.2" rx="2.4" fill="none" stroke="#2f3a4b" stroke-width="2.1"/><path d="M3.6 1.5H5.8L6.8 .3L7.8 1.5H10.2L9.9 3.6H3.9Z" fill="#2f3a4b"/><rect x="4.1" y="6.7" width="4.9" height="1.2" rx=".5" fill="#2f3a4b"/><rect x="4.1" y="8.8" width="5.8" height="1.2" rx=".5" fill="#2f3a4b"/><rect x="4.1" y="11" width="3.6" height="1.2" rx=".5" fill="#2f3a4b"/></svg><div class="a" style="left:733.3px;top:35px;width:17px;height:240px;background:#f1f1f1"></div><div class="a" style="left:735.3px;top:52px;width:13px;height:200px;background:#c1c1c1"></div><svg class="a" style="left:733.3px;top:38px" width="17" height="10"><path d="M4.5 7.5h8l-4-4z" fill="#a3a3a3"/></svg></div>
</div>
<div class="a" style="left:2527px;top:135px;width:17px;height:973px;background:#f1f1f1"></div>
<div class="a" style="left:2529px;top:152px;width:13px;height:846px;background:#c1c1c1"></div>
<svg class="a" style="left:2527px;top:139px" width="17" height="10"><path d="M4.5 7.5h8l-4-4z" fill="#a3a3a3"/></svg>
<svg class="a" style="left:2527px;top:1095px" width="17" height="10"><path d="M4.5 2.5h8l-4 4z" fill="#505050"/></svg>
</body></html>
